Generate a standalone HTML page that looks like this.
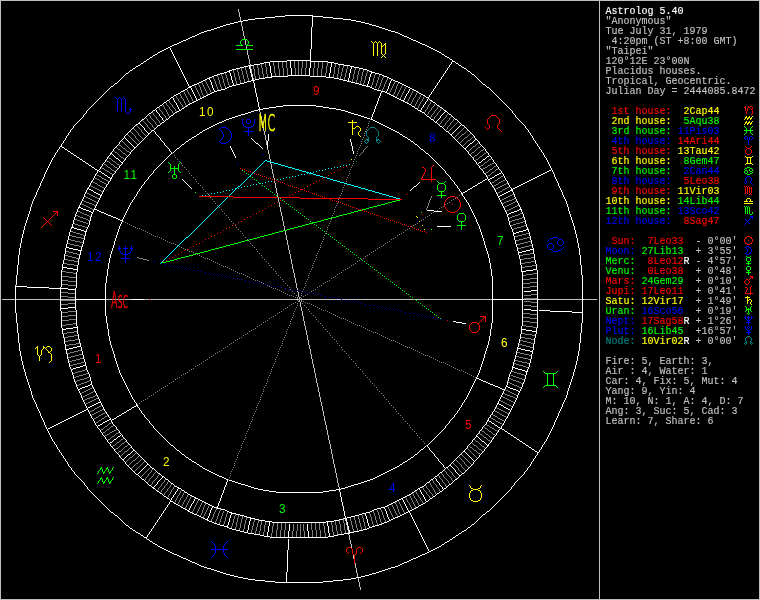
<!DOCTYPE html>
<html><head><meta charset="utf-8"><title>Astrolog 5.40</title>
<style>
html,body{margin:0;padding:0;background:#000;overflow:hidden}
svg{display:block;will-change:transform}
text{font-family:"Liberation Mono",monospace;font-size:10px;white-space:pre;stroke-width:0.15px}
text.h{font-family:"Liberation Sans",sans-serif;font-size:13px;text-anchor:middle;letter-spacing:1.6px}
text.g{font-family:"DejaVu Sans Light","DejaVu Sans","Liberation Sans",sans-serif;font-weight:200;font-size:23.3px;text-anchor:middle;stroke-width:0.7px}
</style></head><body>
<svg width="760" height="600" viewBox="0 0 760 600">
<rect width="760" height="600" fill="#000"/>
<g fill="none" stroke-width="1" shape-rendering="crispEdges">
<path stroke="#0000ff" d="M117.5 99v13M119.5 246v2M119.5 249v2M120.5 251v2M121.5 99v13M125.5 99v13M125.5 246v2M125.5 249v5M125.5 255v3M125.5 259v4M130.5 110v2M130.5 251v2M131.5 246v2M131.5 249v2M214.5 544v2M214.5 553v2M215.5 546v3M215.5 550v3M222.5 132v2M222.5 137v2M223.5 134v3M223.5 546v3M223.5 550v3M224.5 544v2M224.5 553v2M230.5 131v2M230.5 138v2M231.5 133v5M242.5 119v5M243.5 124v2M246.5 120v3M248.5 128v3M248.5 132v4M250.5 120v3M253.5 124v2M254.5 119v5M547.5 245v3M553.5 245v3M557.5 241v3M563.5 241v3M744.5 137v2M745.5 178v3M745.5 326v3M746.5 181v2M747.5 137v3M747.5 249v3M748.5 140v5M748.5 318v2M748.5 323v2M748.5 333v2M749.5 137v3M750.5 181v2M751.5 178v3M751.5 249v3M751.5 326v3M752.5 137v2M115 97.5h1M119 97.5h1M123 97.5h1M116 98.5h1M118 98.5h1M120 98.5h1M122 98.5h1M124 98.5h1M130 108.5h1M129 109.5h3M126 112.5h1M129 112.5h1M127 113.5h2M247 119.5h3M247 123.5h3M244 126.5h2M251 126.5h2M221 127.5h5M246 127.5h5M220 128.5h1M226 128.5h2M219 129.5h1M228 129.5h1M220 130.5h1M229 130.5h1M221 131.5h1M244 131.5h9M745 136.5h2M750 136.5h2M221 139.5h1M745 139.5h1M751 139.5h1M220 140.5h1M229 140.5h1M219 141.5h1M228 141.5h1M220 142.5h1M226 142.5h2M221 143.5h5M263 154.5h1M237 163.5h1M747 176.5h3M746 177.5h1M750 177.5h1M744 182.5h1M745 183.5h1M751 183.5h1M752 184.5h1M750 216.5h3M751 217.5h2M750 218.5h1M752 218.5h1M745 219.5h1M749 219.5h1M746 220.5h1M748 220.5h1M747 221.5h1M746 222.5h1M748 222.5h1M745 223.5h1M749 223.5h1M744 224.5h1M553 237.5h5M550 238.5h3M558 238.5h1M549 239.5h1M559 239.5h3M548 240.5h1M558 240.5h1M562 240.5h1M547 241.5h1M549 243.5h3M548 244.5h1M552 244.5h1M558 244.5h1M562 244.5h1M559 245.5h3M746 246.5h3M563 247.5h1M745 247.5h1M749 247.5h2M118 248.5h3M123 248.5h5M130 248.5h3M548 248.5h1M552 248.5h1M562 248.5h1M746 248.5h1M750 248.5h1M549 249.5h3M561 249.5h1M552 250.5h1M558 250.5h3M553 251.5h5M746 252.5h1M750 252.5h1M121 253.5h2M128 253.5h2M745 253.5h1M749 253.5h2M123 254.5h5M746 254.5h3M121 258.5h9M154 261.5h1M161 263.5h1M165 264.5h1M169 265.5h1M173 266.5h1M177 266.5h1M181 267.5h1M185 268.5h1M189 269.5h1M193 270.5h1M197 270.5h1M201 271.5h1M205 272.5h1M209 273.5h1M213 274.5h1M217 274.5h1M221 275.5h1M225 276.5h1M229 277.5h1M233 278.5h1M237 278.5h1M241 279.5h1M245 280.5h1M249 281.5h1M253 282.5h1M257 282.5h1M261 283.5h1M265 284.5h1M269 285.5h1M273 286.5h1M277 286.5h1M281 287.5h1M285 288.5h1M289 289.5h1M293 290.5h1M297 290.5h1M301 291.5h1M305 292.5h1M309 293.5h1M313 293.5h1M317 294.5h1M321 295.5h1M325 296.5h1M329 297.5h1M333 297.5h1M337 298.5h1M341 299.5h1M345 300.5h1M349 301.5h1M353 301.5h1M357 302.5h1M361 303.5h1M365 304.5h1M369 305.5h1M373 305.5h1M377 306.5h1M381 307.5h1M385 308.5h1M389 309.5h1M393 309.5h1M397 310.5h1M401 311.5h1M405 312.5h1M409 313.5h1M413 313.5h1M417 314.5h1M421 315.5h1M425 316.5h1M745 316.5h1M748 316.5h1M751 316.5h1M429 317.5h1M433 317.5h1M744 317.5h2M747 317.5h3M751 317.5h2M437 318.5h1M745 318.5h1M751 318.5h1M441 319.5h1M746 319.5h1M750 319.5h1M747 320.5h3M748 321.5h1M746 322.5h5M748 326.5h1M747 327.5h1M749 327.5h1M748 328.5h1M746 329.5h1M750 329.5h1M747 330.5h3M748 331.5h1M746 332.5h5M211 541.5h1M227 541.5h1M212 542.5h1M226 542.5h1M213 543.5h1M225 543.5h1M211 549.5h17M213 555.5h1M225 555.5h1M212 556.5h1M226 556.5h1M211 557.5h1M227 557.5h1"/>
<path stroke="#008080" d="M366.5 131v5M368.5 137v2M376.5 137v2M378.5 131v5M745.5 338v3M751.5 338v3M370 127.5h5M369 128.5h1M375 128.5h1M368 129.5h1M376 129.5h1M367 130.5h1M377 130.5h1M367 136.5h1M377 136.5h1M366 139.5h3M376 139.5h3M365 140.5h1M367 140.5h2M376 140.5h2M379 140.5h1M364 141.5h1M368 141.5h1M376 141.5h1M380 141.5h1M365 142.5h1M367 142.5h1M377 142.5h1M379 142.5h1M366 143.5h1M378 143.5h1M356 161.5h1M747 336.5h3M746 337.5h1M750 337.5h1M746 341.5h1M750 341.5h1M745 342.5h2M750 342.5h2M744 343.5h1M746 343.5h1M750 343.5h1M752 343.5h1M745 344.5h1M751 344.5h1"/>
<path stroke="#00ff00" d="M98.5 471v2M98.5 481v2M102.5 469v3M102.5 479v3M108.5 469v3M108.5 479v3M112.5 468v2M112.5 478v2M170.5 164v4M170.5 169v2M172.5 175v3M174.5 166v2M174.5 169v5M176.5 175v3M178.5 164v4M178.5 169v2M240.5 41v3M248.5 41v3M437.5 185v5M441.5 192v3M441.5 196v2M445.5 185v5M457.5 215v5M461.5 222v3M461.5 226v4M465.5 215v5M547.5 374v11M553.5 374v11M744.5 171v2M745.5 207v7M746.5 128v2M746.5 131v2M746.5 258v3M746.5 267v3M746.5 307v2M747.5 171v2M747.5 207v7M748.5 273v2M748.5 310v3M749.5 169v2M749.5 207v7M750.5 128v2M750.5 131v2M750.5 258v3M750.5 267v3M750.5 307v2M752.5 169v2M752.5 212v2M242 39.5h5M241 40.5h1M247 40.5h1M241 44.5h1M247 44.5h1M236 45.5h7M246 45.5h7M236 49.5h17M744 126.5h1M752 126.5h1M745 127.5h1M751 127.5h1M744 130.5h9M745 133.5h1M751 133.5h1M744 134.5h1M752 134.5h1M168 162.5h1M180 162.5h1M169 163.5h1M179 163.5h1M747 167.5h3M170 168.5h9M745 168.5h2M750 168.5h2M744 169.5h1M242 170.5h1M745 170.5h2M169 171.5h1M179 171.5h1M244 171.5h1M750 171.5h2M168 172.5h1M180 172.5h1M752 172.5h1M246 173.5h1M745 173.5h2M750 173.5h2M173 174.5h3M248 174.5h1M747 174.5h3M250 176.5h1M252 177.5h1M173 178.5h3M254 179.5h1M256 180.5h1M437 181.5h1M445 181.5h1M258 182.5h1M438 182.5h1M444 182.5h1M260 183.5h1M439 183.5h5M438 184.5h1M444 184.5h1M262 185.5h1M264 186.5h1M266 188.5h1M268 189.5h1M438 190.5h1M444 190.5h1M270 191.5h1M439 191.5h5M195 192.5h1M272 192.5h1M274 194.5h1M276 195.5h1M437 195.5h9M278 197.5h1M280 198.5h1M282 200.5h1M396 200.5h4M284 201.5h1M392 201.5h4M388 202.5h4M286 203.5h1M385 203.5h3M288 204.5h1M381 204.5h4M377 205.5h4M290 206.5h1M373 206.5h4M744 206.5h1M746 206.5h1M748 206.5h1M292 207.5h1M369 207.5h4M366 208.5h3M294 209.5h1M362 209.5h4M296 210.5h1M358 210.5h4M354 211.5h4M298 212.5h1M351 212.5h3M421 212.5h1M300 213.5h1M347 213.5h4M459 213.5h5M343 214.5h4M458 214.5h1M464 214.5h1M750 214.5h2M302 215.5h1M339 215.5h4M304 216.5h1M336 216.5h3M332 217.5h4M306 218.5h1M328 218.5h4M308 219.5h1M324 219.5h4M321 220.5h3M458 220.5h1M464 220.5h1M310 221.5h1M317 221.5h4M459 221.5h5M312 222.5h5M309 223.5h4M305 224.5h4M314 224.5h1M302 225.5h3M316 225.5h1M457 225.5h9M298 226.5h4M294 227.5h4M318 227.5h1M290 228.5h4M320 228.5h1M287 229.5h3M431 229.5h1M283 230.5h4M322 230.5h1M279 231.5h4M324 231.5h1M275 232.5h4M272 233.5h3M326 233.5h1M268 234.5h4M328 234.5h1M264 235.5h4M260 236.5h4M330 236.5h1M257 237.5h3M332 237.5h1M253 238.5h4M249 239.5h4M334 239.5h1M245 240.5h4M336 240.5h1M241 241.5h4M238 242.5h3M338 242.5h1M234 243.5h4M340 243.5h1M230 244.5h4M226 245.5h4M342 245.5h1M223 246.5h3M344 246.5h1M219 247.5h4M215 248.5h4M346 248.5h1M211 249.5h4M348 249.5h1M208 250.5h3M204 251.5h4M350 251.5h1M200 252.5h4M352 252.5h1M196 253.5h4M193 254.5h3M354 254.5h1M189 255.5h4M356 255.5h1M185 256.5h4M746 256.5h1M750 256.5h1M181 257.5h4M358 257.5h1M747 257.5h3M177 258.5h4M360 258.5h1M174 259.5h3M170 260.5h4M362 260.5h1M166 261.5h4M364 261.5h1M747 261.5h3M162 262.5h4M748 262.5h1M160 263.5h1M366 263.5h1M746 263.5h5M368 264.5h1M748 264.5h1M370 266.5h1M747 266.5h3M372 267.5h1M374 269.5h1M376 270.5h1M747 270.5h3M748 271.5h1M378 272.5h1M746 272.5h5M380 273.5h1M382 275.5h1M384 276.5h1M386 278.5h1M388 279.5h1M390 281.5h1M392 282.5h1M394 284.5h1M396 285.5h1M398 287.5h1M400 288.5h1M402 290.5h1M404 291.5h1M406 293.5h1M408 294.5h1M410 296.5h1M412 297.5h1M414 299.5h1M416 300.5h1M418 302.5h1M420 303.5h1M422 305.5h1M424 306.5h1M745 306.5h1M751 306.5h1M426 308.5h1M748 308.5h1M428 309.5h1M746 309.5h5M746 310.5h1M750 310.5h1M430 311.5h1M745 311.5h1M751 311.5h1M432 312.5h1M747 313.5h1M749 313.5h1M434 314.5h1M748 314.5h1M436 315.5h1M438 317.5h1M440 318.5h1M543 371.5h1M557 371.5h1M544 372.5h1M556 372.5h1M545 373.5h11M545 385.5h11M544 386.5h1M556 386.5h1M543 387.5h1M557 387.5h1M101 467.5h1M107 467.5h1M113 467.5h1M100 468.5h2M106 468.5h2M100 469.5h1M106 469.5h1M99 470.5h1M105 470.5h1M111 470.5h1M104 471.5h1M110 471.5h1M103 472.5h2M109 472.5h2M97 473.5h1M103 473.5h1M109 473.5h1M101 477.5h1M107 477.5h1M113 477.5h1M100 478.5h2M106 478.5h2M100 479.5h1M106 479.5h1M99 480.5h1M105 480.5h1M111 480.5h1M104 481.5h1M110 481.5h1M103 482.5h2M109 482.5h2M97 483.5h1M103 483.5h1M109 483.5h1"/>
<path stroke="#00ffff" d="M265 160.5h2M264 161.5h1M267 161.5h4M263 162.5h1M271 162.5h3M262 163.5h1M274 163.5h4M261 164.5h1M278 164.5h3M349 164.5h1M260 165.5h1M281 165.5h4M343 165.5h1M346 165.5h1M259 166.5h1M285 166.5h3M340 166.5h1M258 167.5h1M288 167.5h4M334 167.5h1M337 167.5h1M257 168.5h1M292 168.5h3M328 168.5h1M331 168.5h1M256 169.5h1M295 169.5h4M325 169.5h1M255 170.5h1M299 170.5h3M319 170.5h1M322 170.5h1M254 171.5h1M302 171.5h4M316 171.5h1M253 172.5h1M306 172.5h3M310 172.5h1M313 172.5h1M252 173.5h1M307 173.5h1M309 173.5h4M251 174.5h1M301 174.5h1M304 174.5h1M313 174.5h3M250 175.5h1M298 175.5h1M316 175.5h4M249 176.5h1M292 176.5h1M295 176.5h1M320 176.5h3M248 177.5h1M286 177.5h1M289 177.5h1M323 177.5h2M326 177.5h1M247 178.5h1M283 178.5h1M327 178.5h3M246 179.5h1M277 179.5h1M280 179.5h1M330 179.5h3M245 180.5h1M333 180.5h4M244 181.5h1M268 181.5h1M271 181.5h1M337 181.5h3M243 182.5h1M265 182.5h1M340 182.5h4M242 183.5h1M259 183.5h1M262 183.5h1M344 183.5h3M241 184.5h1M253 184.5h1M256 184.5h1M347 184.5h4M240 185.5h1M250 185.5h1M351 185.5h3M238 186.5h2M244 186.5h1M247 186.5h1M354 186.5h4M237 187.5h1M241 187.5h1M358 187.5h3M235 188.5h2M238 188.5h1M361 188.5h4M232 189.5h1M235 189.5h1M365 189.5h3M226 190.5h1M229 190.5h1M234 190.5h1M368 190.5h4M223 191.5h1M233 191.5h1M372 191.5h3M217 192.5h1M220 192.5h1M232 192.5h1M375 192.5h4M211 193.5h1M214 193.5h1M231 193.5h1M379 193.5h3M208 194.5h1M230 194.5h1M382 194.5h4M202 195.5h1M205 195.5h1M229 195.5h1M386 195.5h3M389 196.5h4M227 197.5h1M393 197.5h3M226 198.5h1M396 198.5h4M225 199.5h1M224 200.5h1M223 201.5h1M222 202.5h1M221 203.5h1M220 204.5h1M219 205.5h1M218 206.5h1M217 207.5h1M216 208.5h1M215 209.5h1M214 210.5h1M213 211.5h1M212 212.5h1M211 213.5h1M210 214.5h1M209 215.5h1M208 216.5h1M207 217.5h1M206 218.5h1M205 219.5h1M204 220.5h1M203 221.5h1M202 222.5h1M201 223.5h1M200 224.5h1M199 225.5h1M198 226.5h1M197 227.5h1M196 228.5h1M195 229.5h1M194 230.5h1M193 231.5h1M192 232.5h1M191 233.5h1M190 234.5h1M189 235.5h1M188 236.5h1M186 237.5h2M185 238.5h1M184 239.5h1M183 240.5h1M182 241.5h1M181 242.5h1M180 243.5h1M179 244.5h1M178 245.5h1M177 246.5h1M176 247.5h1M175 248.5h1M174 249.5h1M173 250.5h1M172 251.5h1M171 252.5h1M170 253.5h1M169 254.5h1M168 255.5h1M167 256.5h1M166 257.5h1M165 258.5h1M164 259.5h1M163 260.5h1M162 261.5h1M161 262.5h1"/>
<path stroke="#808080" d="M135.5 136v2M138.5 133v2M141.5 130v2M145.5 478v2M147.5 119v2M147.5 125v2M148.5 474v2M149.5 479v2M150.5 116v2M151.5 470v2M152.5 125v2M152.5 482v2M153.5 113v2M153.5 474v2M155.5 122v2M156.5 117v2M157.5 476v2M158.5 488v2M159.5 108v2M159.5 121v2M161.5 484v2M161.5 490v2M162.5 112v2M163.5 105v2M164.5 107v2M164.5 480v2M164.5 486v2M164.5 493v2M165.5 116v2M166.5 103v2M166.5 110v2M167.5 112v2M167.5 482v2M167.5 489v2M168.5 114v2M168.5 495v2M169.5 101v2M169.5 107v2M170.5 485v2M170.5 492v2M171.5 490v2M172.5 105v2M172.5 111v2M173.5 487v2M175.5 109v2M175.5 500v2M176.5 96v2M176.5 498v2M177.5 496v2M178.5 99v2M178.5 502v2M179.5 493v2M179.5 500v2M180.5 94v2M180.5 102v2M180.5 491v2M180.5 498v2M181.5 96v2M182.5 105v2M182.5 495v2M182.5 504v2M183.5 99v2M183.5 493v2M183.5 502v2M184.5 92v2M184.5 101v2M184.5 500v2M185.5 94v2M185.5 103v2M185.5 507v2M186.5 96v2M186.5 497v2M186.5 505v2M187.5 90v2M187.5 98v2M187.5 495v2M187.5 503v2M188.5 92v2M188.5 100v2M188.5 501v2M189.5 102v2M189.5 499v2M190.5 95v2M190.5 497v2M191.5 97v2M192.5 99v2M192.5 511v2M193.5 509v2M194.5 507v2M195.5 86v2M195.5 505v2M196.5 88v2M196.5 503v2M197.5 90v2M197.5 501v2M197.5 511v2M198.5 92v2M198.5 509v2M199.5 85v2M199.5 94v2M199.5 507v2M200.5 87v3M200.5 96v2M200.5 505v2M201.5 90v3M201.5 503v2M201.5 513v2M202.5 83v2M202.5 93v2M202.5 510v3M203.5 85v2M203.5 95v2M203.5 507v3M203.5 516v2M204.5 87v2M204.5 505v2M204.5 514v2M205.5 80v2M205.5 89v2M205.5 503v2M205.5 512v2M206.5 82v2M206.5 91v2M206.5 510v2M207.5 84v2M207.5 93v2M207.5 508v2M208.5 86v2M208.5 506v2M209.5 88v2M210.5 90v2M211.5 519v2M212.5 517v2M213.5 77v2M213.5 514v3M214.5 79v2M214.5 512v2M215.5 81v3M215.5 510v2M215.5 521v2M216.5 84v3M216.5 508v2M216.5 519v2M217.5 75v2M217.5 87v2M217.5 516v3M218.5 77v3M218.5 513v3M219.5 80v4M219.5 511v2M219.5 522v2M220.5 84v3M220.5 509v2M220.5 519v3M221.5 74v2M221.5 87v2M221.5 516v3M222.5 76v3M222.5 513v3M223.5 79v4M223.5 511v2M224.5 83v3M224.5 521v3M225.5 73v2M225.5 86v2M225.5 517v4M226.5 75v3M226.5 514v3M227.5 78v4M227.5 512v2M228.5 82v3M231.5 526v2M232.5 523v3M233.5 70v3M233.5 519v4M234.5 73v4M234.5 516v3M235.5 77v4M235.5 514v2M235.5 527v2M236.5 81v3M236.5 522v5M237.5 69v3M237.5 518v4M238.5 72v4M238.5 515v3M239.5 76v4M239.5 528v2M240.5 80v3M240.5 523v5M241.5 68v3M241.5 519v4M242.5 71v4M242.5 516v3M243.5 75v4M243.5 529v2M244.5 79v3M244.5 524v5M245.5 67v3M245.5 520v4M246.5 70v4M246.5 517v3M247.5 74v4M248.5 78v3M251.5 530v3M252.5 526v4M253.5 66v3M253.5 522v4M254.5 69v7M254.5 519v3M255.5 76v3M255.5 531v3M256.5 527v4M257.5 65v3M257.5 523v4M258.5 68v7M258.5 520v3M259.5 75v3M259.5 531v3M260.5 525v6M261.5 64v4M261.5 521v4M262.5 68v6M263.5 74v4M263.5 532v3M264.5 525v7M265.5 63v4M265.5 522v3M266.5 67v7M267.5 74v3M271.5 533v4M272.5 526v7M273.5 62v4M273.5 523v3M274.5 66v7M275.5 73v3M276.5 530v7M277.5 523v7M278.5 62v7M279.5 69v7M280.5 530v7M281.5 523v7M282.5 62v6M283.5 68v8M284.5 530v7M285.5 523v7M286.5 62v6M287.5 68v8M292.5 531v6M293.5 524v7M294.5 61v7M295.5 68v7M296.5 531v6M297.5 297v2M297.5 524v7M298.5 61v14M300.5 524v13M301.5 68v7M301.5 300v2M302.5 61v7M303.5 524v7M304.5 531v6M305.5 68v7M306.5 61v7M311.5 523v7M312.5 530v7M313.5 68v8M314.5 62v6M315.5 523v7M316.5 530v7M317.5 68v8M318.5 62v6M319.5 523v7M320.5 530v7M321.5 69v7M322.5 62v7M323.5 523v3M324.5 526v7M325.5 73v3M325.5 533v4M326.5 66v7M327.5 62v4M331.5 522v3M332.5 525v7M333.5 74v3M333.5 532v4M334.5 67v7M335.5 64v3M335.5 521v4M336.5 525v6M337.5 74v4M337.5 531v4M338.5 68v6M339.5 65v3M339.5 520v4M340.5 76v3M340.5 524v7M341.5 72v4M341.5 531v3M342.5 68v4M343.5 65v3M343.5 519v4M344.5 77v3M344.5 523v7M345.5 73v4M345.5 530v3M346.5 69v4M347.5 66v3M350.5 518v3M351.5 521v4M352.5 79v3M352.5 525v4M353.5 74v5M353.5 529v3M354.5 70v4M354.5 517v3M355.5 68v2M355.5 520v4M356.5 80v3M356.5 524v4M357.5 75v5M357.5 528v3M358.5 71v4M358.5 516v3M359.5 69v2M359.5 519v4M360.5 81v3M360.5 523v4M361.5 76v5M361.5 527v3M362.5 72v4M362.5 515v3M363.5 70v2M363.5 83v2M363.5 150v2M363.5 518v4M364.5 80v3M364.5 522v4M365.5 76v4M365.5 526v3M366.5 73v3M367.5 71v2M370.5 514v3M371.5 85v2M371.5 517v4M372.5 82v3M372.5 521v3M373.5 78v4M373.5 511v2M373.5 524v2M374.5 75v3M374.5 513v3M375.5 86v2M375.5 516v4M376.5 83v3M376.5 520v3M377.5 80v3M377.5 510v2M377.5 523v2M378.5 77v3M378.5 88v2M378.5 512v3M379.5 75v2M379.5 86v2M379.5 515v4M380.5 83v3M380.5 519v3M381.5 80v3M381.5 510v2M381.5 522v2M382.5 78v2M382.5 89v2M382.5 512v3M383.5 76v2M383.5 87v2M383.5 515v3M384.5 84v3M384.5 518v2M385.5 82v2M385.5 520v2M386.5 80v2M387.5 78v2M388.5 507v2M389.5 92v2M389.5 509v2M390.5 90v2M390.5 511v2M391.5 88v2M391.5 513v2M392.5 86v2M392.5 505v2M392.5 515v2M393.5 84v2M393.5 94v2M393.5 507v2M394.5 82v2M394.5 92v2M394.5 509v2M395.5 89v3M395.5 502v2M395.5 511v2M396.5 86v3M396.5 504v2M396.5 513v2M397.5 84v2M397.5 94v2M397.5 506v3M397.5 515v2M398.5 92v2M398.5 509v3M399.5 90v2M399.5 502v2M399.5 512v2M400.5 88v2M400.5 97v2M400.5 504v2M401.5 86v2M401.5 95v2M401.5 506v2M402.5 93v2M402.5 508v2M403.5 91v2M403.5 510v2M404.5 89v2M405.5 87v2M406.5 498v2M407.5 101v2M407.5 500v2M408.5 99v2M409.5 97v2M409.5 503v2M410.5 95v2M410.5 496v2M410.5 505v2M411.5 93v2M411.5 102v2M411.5 498v2M411.5 507v2M412.5 91v2M412.5 100v2M412.5 500v2M413.5 98v2M413.5 494v2M413.5 502v2M414.5 496v2M414.5 504v2M415.5 95v2M415.5 104v2M415.5 506v2M416.5 93v2M416.5 102v2M416.5 492v2M416.5 499v2M417.5 100v2M417.5 501v2M418.5 106v2M418.5 495v2M418.5 503v2M419.5 97v2M419.5 104v2M420.5 95v2M420.5 102v2M420.5 498v2M422.5 99v2M422.5 501v2M423.5 97v2M423.5 488v2M425.5 110v2M426.5 208v2M426.5 486v2M426.5 492v2M427.5 107v2M427.5 206v2M428.5 105v2M428.5 112v2M428.5 203v3M429.5 200v3M429.5 490v2M429.5 496v2M430.5 102v2M430.5 198v2M430.5 483v2M431.5 108v2M431.5 115v2M431.5 196v2M431.5 485v2M432.5 494v2M433.5 481v2M433.5 488v2M434.5 104v2M434.5 111v2M434.5 117v2M434.5 490v2M435.5 492v2M436.5 485v2M437.5 107v2M437.5 113v2M439.5 476v2M439.5 489v2M440.5 109v2M441.5 121v2M442.5 480v2M443.5 475v2M445.5 123v2M445.5 484v2M446.5 115v2M446.5 472v2M447.5 127v2M448.5 481v2M449.5 118v2M450.5 123v2M451.5 478v2M452.5 473v2M453.5 119v2M458.5 468v2M461.5 465v2M464.5 462v2M375 74.5h1M201 82.5h1M398 83.5h1M198 84.5h1M194 85.5h1M229 85.5h1M402 85.5h1M218 89.5h1M413 90.5h1M183 91.5h1M211 92.5h1M417 92.5h1M189 94.5h1M396 96.5h1M424 96.5h1M414 97.5h1M177 98.5h1M182 98.5h1M418 99.5h1M179 101.5h1M193 101.5h1M421 101.5h1M431 101.5h1M170 103.5h1M171 104.5h1M181 104.5h1M429 104.5h1M167 105.5h1M186 105.5h1M168 106.5h1M414 106.5h1M433 106.5h1M438 106.5h1M173 107.5h1M183 107.5h1M432 107.5h1M174 108.5h1M417 108.5h1M441 108.5h1M165 109.5h1M170 109.5h1M426 109.5h1M436 109.5h1M160 110.5h1M171 110.5h1M430 110.5h1M435 110.5h1M161 111.5h1M176 111.5h1M429 111.5h1M439 111.5h1M152 112.5h1M424 112.5h1M438 112.5h1M173 113.5h1M433 113.5h1M163 114.5h1M427 114.5h1M432 114.5h1M447 114.5h1M149 115.5h1M154 115.5h1M164 115.5h1M436 115.5h1M155 116.5h1M169 116.5h1M435 116.5h1M451 116.5h1M430 117.5h1M445 117.5h1M450 117.5h1M146 118.5h1M151 118.5h1M166 118.5h1M444 118.5h1M152 119.5h1M157 119.5h1M370 119.5h1M433 119.5h1M443 119.5h1M142 120.5h1M153 120.5h1M158 120.5h1M442 120.5h1M448 120.5h1M143 121.5h1M148 121.5h1M154 121.5h1M369 121.5h1M447 121.5h1M452 121.5h1M144 122.5h1M149 122.5h1M446 122.5h1M451 122.5h1M457 122.5h1M145 123.5h1M150 123.5h1M160 123.5h1M368 123.5h1M440 123.5h1M456 123.5h1M146 124.5h1M151 124.5h1M156 124.5h1M439 124.5h1M455 124.5h1M136 125.5h1M157 125.5h1M368 125.5h1M444 125.5h1M449 125.5h1M454 125.5h1M137 126.5h1M443 126.5h1M448 126.5h1M453 126.5h1M138 127.5h1M148 127.5h1M153 127.5h1M367 127.5h1M452 127.5h1M464 127.5h1M133 128.5h1M139 128.5h1M149 128.5h1M154 128.5h1M451 128.5h1M463 128.5h1M134 129.5h1M140 129.5h1M150 129.5h1M366 129.5h1M446 129.5h1M450 129.5h1M462 129.5h1M135 130.5h1M151 130.5h1M449 130.5h1M461 130.5h1M467 130.5h1M130 131.5h1M136 131.5h1M365 131.5h1M448 131.5h1M460 131.5h1M466 131.5h1M131 132.5h1M137 132.5h1M142 132.5h1M459 132.5h1M465 132.5h1M132 133.5h1M143 133.5h1M364 133.5h1M458 133.5h1M464 133.5h1M470 133.5h1M127 134.5h1M133 134.5h1M144 134.5h1M457 134.5h1M462 134.5h2M469 134.5h1M128 135.5h1M134 135.5h1M139 135.5h1M145 135.5h1M364 135.5h1M456 135.5h1M461 135.5h1M468 135.5h1M129 136.5h1M140 136.5h1M455 136.5h1M460 136.5h1M467 136.5h1M473 136.5h1M130 137.5h1M141 137.5h1M363 137.5h1M454 137.5h1M459 137.5h1M465 137.5h2M472 137.5h1M131 138.5h1M136 138.5h1M142 138.5h1M458 138.5h1M464 138.5h1M471 138.5h1M132 139.5h1M137 139.5h1M362 139.5h1M457 139.5h1M463 139.5h1M470 139.5h1M133 140.5h1M138 140.5h1M462 140.5h1M468 140.5h2M122 141.5h1M134 141.5h1M139 141.5h1M361 141.5h1M461 141.5h1M467 141.5h1M123 142.5h1M135 142.5h1M460 142.5h1M466 142.5h1M478 142.5h1M124 143.5h1M136 143.5h1M361 143.5h1M465 143.5h1M477 143.5h1M125 144.5h1M137 144.5h1M464 144.5h1M476 144.5h1M119 145.5h2M126 145.5h1M360 145.5h1M463 145.5h1M475 145.5h1M121 146.5h1M127 146.5h1M367 146.5h1M473 146.5h2M480 146.5h1M116 147.5h1M122 147.5h1M128 147.5h1M359 147.5h1M366 147.5h1M472 147.5h1M478 147.5h2M117 148.5h1M123 148.5h2M129 148.5h1M365 148.5h1M471 148.5h1M477 148.5h1M118 149.5h2M125 149.5h1M130 149.5h1M358 149.5h1M364 149.5h1M470 149.5h1M476 149.5h1M483 149.5h1M120 150.5h1M126 150.5h1M131 150.5h1M469 150.5h1M475 150.5h1M481 150.5h2M114 151.5h1M121 151.5h1M127 151.5h2M357 151.5h1M468 151.5h1M474 151.5h1M480 151.5h1M115 152.5h2M122 152.5h1M129 152.5h1M362 152.5h1M472 152.5h2M479 152.5h1M486 152.5h1M117 153.5h1M123 153.5h2M172 153.5h1M357 153.5h1M361 153.5h1M471 153.5h1M478 153.5h1M484 153.5h2M118 154.5h1M125 154.5h1M360 154.5h1M470 154.5h1M477 154.5h1M483 154.5h1M119 155.5h1M126 155.5h1M174 155.5h1M356 155.5h1M359 155.5h1M475 155.5h2M482 155.5h1M120 156.5h1M474 156.5h1M480 156.5h2M108 157.5h1M121 157.5h2M175 157.5h1M355 157.5h1M473 157.5h1M479 157.5h1M109 158.5h2M123 158.5h1M478 158.5h1M111 159.5h1M124 159.5h1M177 159.5h1M354 159.5h1M476 159.5h2M489 159.5h2M106 160.5h1M112 160.5h1M475 160.5h1M488 160.5h1M107 161.5h2M113 161.5h2M179 161.5h1M353 161.5h1M487 161.5h1M109 162.5h1M115 162.5h1M485 162.5h2M110 163.5h1M116 163.5h1M181 163.5h1M353 163.5h1M484 163.5h1M492 163.5h2M104 164.5h2M111 164.5h2M117 164.5h2M483 164.5h1M490 164.5h2M106 165.5h1M113 165.5h1M119 165.5h1M182 165.5h1M352 165.5h1M481 165.5h2M488 165.5h2M107 166.5h1M114 166.5h1M480 166.5h1M487 166.5h1M494 166.5h2M101 167.5h1M108 167.5h2M115 167.5h2M184 167.5h1M351 167.5h1M485 167.5h2M493 167.5h1M102 168.5h2M110 168.5h1M117 168.5h1M483 168.5h2M492 168.5h1M104 169.5h1M111 169.5h1M186 169.5h1M350 169.5h1M482 169.5h1M490 169.5h2M496 169.5h2M105 170.5h2M112 170.5h2M489 170.5h1M495 170.5h1M107 171.5h2M114 171.5h1M188 171.5h1M349 171.5h1M488 171.5h1M494 171.5h1M109 172.5h1M486 172.5h2M492 172.5h2M110 173.5h2M189 173.5h1M349 173.5h1M485 173.5h1M491 173.5h1M96 174.5h1M112 174.5h1M490 174.5h1M97 175.5h2M191 175.5h1M348 175.5h1M488 175.5h2M99 176.5h2M487 176.5h1M501 176.5h2M101 177.5h1M193 177.5h1M347 177.5h1M500 177.5h1M95 178.5h2M102 178.5h2M498 178.5h2M97 179.5h2M104 179.5h2M195 179.5h1M346 179.5h1M497 179.5h1M99 180.5h1M106 180.5h2M495 180.5h2M503 180.5h2M92 181.5h1M100 181.5h2M108 181.5h1M196 181.5h1M346 181.5h1M494 181.5h1M501 181.5h2M93 182.5h2M102 182.5h2M492 182.5h2M499 182.5h2M95 183.5h2M104 183.5h2M198 183.5h1M491 183.5h1M498 183.5h1M506 183.5h2M97 184.5h1M106 184.5h1M496 184.5h2M504 184.5h2M90 185.5h1M98 185.5h2M200 185.5h1M344 185.5h1M494 185.5h2M502 185.5h2M91 186.5h2M100 186.5h2M493 186.5h1M500 186.5h2M93 187.5h2M102 187.5h2M202 187.5h1M343 187.5h1M498 187.5h2M507 187.5h2M95 188.5h2M496 188.5h2M505 188.5h2M97 189.5h2M203 189.5h1M342 189.5h1M495 189.5h1M503 189.5h2M99 190.5h2M502 190.5h1M101 191.5h2M205 191.5h1M342 191.5h1M500 191.5h2M86 192.5h1M498 192.5h2M87 193.5h2M207 193.5h1M341 193.5h1M497 193.5h1M89 194.5h2M461 194.5h1M512 194.5h2M91 195.5h2M209 195.5h1M340 195.5h1M459 195.5h1M510 195.5h2M85 196.5h1M93 196.5h2M508 196.5h2M86 197.5h2M95 197.5h2M210 197.5h1M339 197.5h1M457 197.5h1M506 197.5h2M88 198.5h2M97 198.5h2M455 198.5h1M504 198.5h2M514 198.5h1M90 199.5h2M212 199.5h1M338 199.5h1M453 199.5h1M502 199.5h2M512 199.5h2M83 200.5h1M92 200.5h2M451 200.5h1M501 200.5h1M509 200.5h3M84 201.5h2M94 201.5h2M214 201.5h1M338 201.5h1M506 201.5h3M515 201.5h2M86 202.5h3M96 202.5h1M449 202.5h1M504 202.5h2M513 202.5h2M81 203.5h1M89 203.5h3M215 203.5h1M337 203.5h1M447 203.5h1M502 203.5h2M511 203.5h2M82 204.5h2M92 204.5h2M445 204.5h1M509 204.5h2M84 205.5h2M94 205.5h2M217 205.5h1M336 205.5h1M507 205.5h2M517 205.5h2M86 206.5h2M443 206.5h1M505 206.5h2M515 206.5h2M88 207.5h2M219 207.5h1M335 207.5h1M441 207.5h1M504 207.5h1M513 207.5h2M90 208.5h2M439 208.5h1M511 208.5h2M92 209.5h2M221 209.5h1M334 209.5h1M509 209.5h2M437 210.5h1M507 210.5h2M78 211.5h2M222 211.5h1M334 211.5h1M506 211.5h1M80 212.5h2M433 212.5h1M82 213.5h2M224 213.5h1M333 213.5h1M431 213.5h1M520 213.5h2M84 214.5h3M518 214.5h2M76 215.5h2M87 215.5h2M226 215.5h1M332 215.5h1M429 215.5h1M515 215.5h3M78 216.5h2M89 216.5h2M427 216.5h1M512 216.5h3M80 217.5h3M228 217.5h1M331 217.5h1M425 217.5h1M510 217.5h2M522 217.5h2M83 218.5h3M509 218.5h1M519 218.5h3M75 219.5h2M86 219.5h2M229 219.5h1M331 219.5h1M423 219.5h1M515 219.5h4M77 220.5h3M88 220.5h2M421 220.5h1M512 220.5h3M80 221.5h3M123 221.5h1M231 221.5h1M330 221.5h1M510 221.5h2M523 221.5h2M83 222.5h3M125 222.5h1M520 222.5h3M74 223.5h1M86 223.5h2M127 223.5h1M233 223.5h1M329 223.5h1M417 223.5h1M516 223.5h4M75 224.5h3M129 224.5h1M415 224.5h1M513 224.5h3M78 225.5h4M131 225.5h1M235 225.5h1M328 225.5h1M413 225.5h1M511 225.5h2M524 225.5h2M82 226.5h3M133 226.5h1M411 226.5h1M521 226.5h3M85 227.5h2M135 227.5h1M236 227.5h1M327 227.5h1M517 227.5h4M137 228.5h1M139 228.5h1M409 228.5h1M514 228.5h3M141 229.5h1M238 229.5h1M327 229.5h1M407 229.5h1M513 229.5h1M143 230.5h1M405 230.5h1M71 231.5h2M145 231.5h1M240 231.5h1M326 231.5h1M73 232.5h3M147 232.5h1M403 232.5h1M76 233.5h4M149 233.5h1M242 233.5h1M325 233.5h1M401 233.5h1M526 233.5h3M80 234.5h3M151 234.5h1M399 234.5h1M522 234.5h4M70 235.5h2M83 235.5h2M153 235.5h1M243 235.5h1M324 235.5h1M397 235.5h1M518 235.5h4M72 236.5h4M155 236.5h1M157 236.5h1M515 236.5h3M76 237.5h5M159 237.5h1M245 237.5h1M323 237.5h1M395 237.5h1M527 237.5h3M81 238.5h3M161 238.5h1M393 238.5h1M523 238.5h4M69 239.5h2M163 239.5h1M247 239.5h1M323 239.5h1M391 239.5h1M519 239.5h4M71 240.5h4M165 240.5h1M516 240.5h3M75 241.5h5M167 241.5h1M249 241.5h1M322 241.5h1M389 241.5h1M528 241.5h3M80 242.5h3M169 242.5h1M387 242.5h1M524 242.5h4M68 243.5h2M171 243.5h1M173 243.5h1M250 243.5h1M321 243.5h1M385 243.5h1M520 243.5h4M70 244.5h4M175 244.5h1M517 244.5h3M74 245.5h5M177 245.5h1M252 245.5h1M320 245.5h1M383 245.5h1M529 245.5h3M79 246.5h3M179 246.5h1M381 246.5h1M525 246.5h4M181 247.5h1M254 247.5h1M320 247.5h1M379 247.5h1M521 247.5h4M183 248.5h1M377 248.5h1M518 248.5h3M185 249.5h1M256 249.5h1M319 249.5h1M187 250.5h1M375 250.5h1M66 251.5h3M189 251.5h1M191 251.5h1M257 251.5h1M318 251.5h1M373 251.5h1M69 252.5h4M193 252.5h1M371 252.5h1M73 253.5h4M195 253.5h1M259 253.5h1M317 253.5h1M530 253.5h3M77 254.5h3M197 254.5h1M369 254.5h1M523 254.5h7M65 255.5h3M199 255.5h1M261 255.5h1M316 255.5h1M367 255.5h1M520 255.5h3M68 256.5h4M201 256.5h1M365 256.5h1M72 257.5h4M137 257.5h2M203 257.5h1M262 257.5h1M316 257.5h1M531 257.5h3M76 258.5h3M139 258.5h4M205 258.5h1M207 258.5h1M363 258.5h1M524 258.5h7M65 259.5h3M143 259.5h4M209 259.5h1M264 259.5h1M315 259.5h1M361 259.5h1M521 259.5h3M68 260.5h6M147 260.5h2M211 260.5h1M359 260.5h1M74 261.5h4M213 261.5h1M266 261.5h1M314 261.5h1M357 261.5h1M531 261.5h4M215 262.5h1M525 262.5h6M64 263.5h3M217 263.5h1M268 263.5h1M313 263.5h1M355 263.5h1M521 263.5h4M67 264.5h7M219 264.5h1M353 264.5h1M74 265.5h3M221 265.5h1M269 265.5h1M312 265.5h1M351 265.5h1M532 265.5h4M223 266.5h1M225 266.5h1M525 266.5h7M227 267.5h1M271 267.5h1M312 267.5h1M349 267.5h1M522 267.5h3M229 268.5h1M347 268.5h1M231 269.5h1M273 269.5h1M311 269.5h1M345 269.5h1M233 270.5h1M343 270.5h1M62 271.5h4M235 271.5h1M275 271.5h1M310 271.5h1M66 272.5h7M237 272.5h1M341 272.5h1M73 273.5h3M239 273.5h1M241 273.5h1M276 273.5h1M309 273.5h1M339 273.5h1M533 273.5h4M243 274.5h1M337 274.5h1M526 274.5h7M245 275.5h1M278 275.5h1M308 275.5h1M523 275.5h3M62 276.5h7M247 276.5h1M335 276.5h1M69 277.5h7M249 277.5h1M280 277.5h1M308 277.5h1M333 277.5h1M251 278.5h1M331 278.5h1M530 278.5h7M253 279.5h1M282 279.5h1M307 279.5h1M523 279.5h7M62 280.5h6M255 280.5h1M257 280.5h1M329 280.5h1M68 281.5h8M259 281.5h1M283 281.5h1M306 281.5h1M327 281.5h1M261 282.5h1M325 282.5h1M530 282.5h7M263 283.5h1M285 283.5h1M305 283.5h1M323 283.5h1M523 283.5h7M62 284.5h6M68 285.5h8M267 285.5h1M287 285.5h1M305 285.5h1M321 285.5h1M269 286.5h1M319 286.5h1M530 286.5h7M271 287.5h1M289 287.5h1M304 287.5h1M317 287.5h1M523 287.5h7M273 288.5h1M275 288.5h1M277 289.5h1M290 289.5h1M303 289.5h1M315 289.5h1M279 290.5h1M313 290.5h1M281 291.5h1M292 291.5h1M302 291.5h1M311 291.5h1M61 292.5h7M283 292.5h1M68 293.5h7M285 293.5h1M294 293.5h1M301 293.5h1M287 294.5h1M307 294.5h1M531 294.5h6M289 295.5h1M291 295.5h1M296 295.5h1M301 295.5h1M305 295.5h1M524 295.5h7M61 296.5h7M293 296.5h1M303 296.5h1M68 297.5h7M295 297.5h1M300 297.5h1M301 298.5h1M524 298.5h13M299 299.5h1M61 300.5h14M297 300.5h1M298 301.5h1M303 301.5h1M524 301.5h7M295 302.5h1M305 302.5h1M531 302.5h6M68 303.5h7M293 303.5h1M297 303.5h1M302 303.5h1M307 303.5h1M309 303.5h1M61 304.5h7M291 304.5h1M311 304.5h1M289 305.5h1M297 305.5h1M304 305.5h1M313 305.5h1M524 305.5h7M315 306.5h1M531 306.5h6M287 307.5h1M296 307.5h1M306 307.5h1M317 307.5h1M285 308.5h1M319 308.5h1M283 309.5h1M295 309.5h1M308 309.5h1M321 309.5h1M323 310.5h1M325 310.5h1M68 311.5h8M281 311.5h1M294 311.5h1M309 311.5h1M327 311.5h1M62 312.5h6M279 312.5h1M329 312.5h1M277 313.5h1M293 313.5h1M311 313.5h1M331 313.5h1M523 313.5h7M333 314.5h1M530 314.5h7M68 315.5h8M275 315.5h1M293 315.5h1M313 315.5h1M335 315.5h1M62 316.5h6M273 316.5h1M337 316.5h1M271 317.5h1M292 317.5h1M315 317.5h1M339 317.5h1M523 317.5h7M269 318.5h1M341 318.5h1M343 318.5h1M530 318.5h7M69 319.5h7M291 319.5h1M316 319.5h1M345 319.5h1M62 320.5h7M267 320.5h1M347 320.5h1M265 321.5h1M290 321.5h1M318 321.5h1M349 321.5h1M523 321.5h7M263 322.5h1M351 322.5h1M530 322.5h7M73 323.5h3M290 323.5h1M320 323.5h1M353 323.5h1M66 324.5h7M261 324.5h1M355 324.5h1M62 325.5h4M259 325.5h1M289 325.5h1M322 325.5h1M357 325.5h1M359 325.5h1M523 325.5h3M257 326.5h1M361 326.5h1M526 326.5h7M288 327.5h1M323 327.5h1M363 327.5h1M533 327.5h4M255 328.5h1M365 328.5h1M253 329.5h1M287 329.5h1M325 329.5h1M367 329.5h1M251 330.5h1M369 330.5h1M74 331.5h3M249 331.5h1M286 331.5h1M327 331.5h1M371 331.5h1M67 332.5h7M373 332.5h1M375 332.5h1M63 333.5h4M247 333.5h1M286 333.5h1M329 333.5h1M377 333.5h1M522 333.5h3M245 334.5h1M379 334.5h1M525 334.5h7M74 335.5h4M243 335.5h1M285 335.5h1M330 335.5h1M381 335.5h1M532 335.5h3M68 336.5h6M383 336.5h1M64 337.5h4M241 337.5h1M284 337.5h1M332 337.5h1M385 337.5h1M521 337.5h4M239 338.5h1M387 338.5h1M525 338.5h6M75 339.5h4M237 339.5h1M283 339.5h1M334 339.5h1M389 339.5h1M531 339.5h3M68 340.5h7M235 340.5h1M391 340.5h1M393 340.5h1M520 340.5h3M65 341.5h3M282 341.5h1M336 341.5h1M395 341.5h1M523 341.5h4M233 342.5h1M397 342.5h1M527 342.5h4M76 343.5h4M231 343.5h1M282 343.5h1M337 343.5h1M399 343.5h1M531 343.5h3M69 344.5h7M229 344.5h1M401 344.5h1M519 344.5h3M66 345.5h3M281 345.5h1M339 345.5h1M403 345.5h1M522 345.5h4M227 346.5h1M405 346.5h1M526 346.5h4M225 347.5h1M280 347.5h1M341 347.5h1M407 347.5h1M409 347.5h1M530 347.5h3M223 348.5h1M411 348.5h1M279 349.5h1M342 349.5h1M413 349.5h1M78 350.5h3M221 350.5h1M415 350.5h1M74 351.5h4M219 351.5h1M278 351.5h1M344 351.5h1M417 351.5h1M70 352.5h4M217 352.5h1M419 352.5h1M517 352.5h3M67 353.5h3M215 353.5h1M278 353.5h1M346 353.5h1M421 353.5h1M520 353.5h4M79 354.5h3M423 354.5h1M524 354.5h5M75 355.5h4M213 355.5h1M277 355.5h1M348 355.5h1M425 355.5h1M427 355.5h1M529 355.5h2M71 356.5h4M211 356.5h1M429 356.5h1M516 356.5h3M68 357.5h3M209 357.5h1M276 357.5h1M349 357.5h1M431 357.5h1M519 357.5h4M80 358.5h3M433 358.5h1M523 358.5h5M76 359.5h4M207 359.5h1M275 359.5h1M351 359.5h1M435 359.5h1M528 359.5h2M72 360.5h4M205 360.5h1M437 360.5h1M515 360.5h3M69 361.5h3M203 361.5h1M275 361.5h1M353 361.5h1M439 361.5h1M518 361.5h4M81 362.5h3M441 362.5h1M443 362.5h1M522 362.5h5M77 363.5h4M201 363.5h1M274 363.5h1M355 363.5h1M445 363.5h1M514 363.5h2M527 363.5h2M73 364.5h4M199 364.5h1M447 364.5h1M516 364.5h3M70 365.5h3M197 365.5h1M273 365.5h1M356 365.5h1M449 365.5h1M519 365.5h4M195 366.5h1M451 366.5h1M523 366.5h3M272 367.5h1M358 367.5h1M453 367.5h1M526 367.5h2M193 368.5h1M455 368.5h1M85 369.5h1M191 369.5h1M271 369.5h1M360 369.5h1M457 369.5h1M82 370.5h3M189 370.5h1M459 370.5h1M461 370.5h1M78 371.5h4M271 371.5h1M362 371.5h1M463 371.5h1M512 371.5h2M75 372.5h3M187 372.5h1M465 372.5h1M514 372.5h3M73 373.5h2M86 373.5h2M185 373.5h1M270 373.5h1M363 373.5h1M467 373.5h1M517 373.5h4M83 374.5h3M183 374.5h1M469 374.5h1M521 374.5h3M79 375.5h4M181 375.5h1M269 375.5h1M365 375.5h1M471 375.5h1M511 375.5h2M524 375.5h1M76 376.5h3M473 376.5h1M513 376.5h3M74 377.5h2M87 377.5h2M179 377.5h1M268 377.5h1M367 377.5h1M475 377.5h1M516 377.5h3M84 378.5h3M177 378.5h1M509 378.5h2M519 378.5h3M80 379.5h4M175 379.5h1M267 379.5h1M369 379.5h1M511 379.5h2M522 379.5h2M77 380.5h3M89 380.5h1M513 380.5h3M75 381.5h2M87 381.5h2M173 381.5h1M267 381.5h1M370 381.5h1M516 381.5h3M84 382.5h3M171 382.5h1M508 382.5h2M519 382.5h2M81 383.5h3M169 383.5h1M266 383.5h1M372 383.5h1M510 383.5h2M521 383.5h2M79 384.5h2M512 384.5h2M77 385.5h2M167 385.5h1M265 385.5h1M374 385.5h1M514 385.5h3M165 386.5h1M517 386.5h2M92 387.5h1M163 387.5h1M264 387.5h1M376 387.5h1M519 387.5h2M90 388.5h2M161 388.5h1M88 389.5h2M263 389.5h1M377 389.5h1M505 389.5h1M86 390.5h2M159 390.5h1M506 390.5h2M84 391.5h2M93 391.5h2M157 391.5h1M263 391.5h1M379 391.5h1M508 391.5h2M82 392.5h2M91 392.5h2M155 392.5h1M510 392.5h2M81 393.5h1M89 393.5h2M262 393.5h1M381 393.5h1M503 393.5h2M512 393.5h2M87 394.5h2M153 394.5h1M505 394.5h2M514 394.5h2M85 395.5h2M95 395.5h2M151 395.5h1M261 395.5h1M383 395.5h1M507 395.5h3M516 395.5h1M83 396.5h2M93 396.5h2M149 396.5h1M502 396.5h1M510 396.5h3M82 397.5h1M90 397.5h3M260 397.5h1M384 397.5h1M503 397.5h2M513 397.5h2M87 398.5h3M96 398.5h2M147 398.5h1M505 398.5h2M515 398.5h1M85 399.5h2M94 399.5h2M145 399.5h1M260 399.5h1M386 399.5h1M507 399.5h2M84 400.5h1M92 400.5h2M143 400.5h1M500 400.5h1M509 400.5h2M90 401.5h2M141 401.5h1M259 401.5h1M388 401.5h1M501 401.5h2M511 401.5h2M88 402.5h2M503 402.5h2M513 402.5h1M86 403.5h2M139 403.5h1M258 403.5h1M389 403.5h1M505 403.5h2M137 404.5h1M507 404.5h2M101 405.5h1M257 405.5h1M391 405.5h1M509 405.5h2M99 406.5h2M511 406.5h1M97 407.5h2M256 407.5h1M393 407.5h1M496 407.5h1M95 408.5h2M497 408.5h2M94 409.5h1M102 409.5h2M256 409.5h1M395 409.5h1M499 409.5h2M92 410.5h2M100 410.5h2M501 410.5h2M90 411.5h2M98 411.5h2M255 411.5h1M396 411.5h1M495 411.5h2M503 411.5h2M96 412.5h2M105 412.5h1M497 412.5h2M505 412.5h2M94 413.5h2M103 413.5h2M254 413.5h1M398 413.5h1M499 413.5h1M507 413.5h2M92 414.5h2M101 414.5h2M492 414.5h1M500 414.5h2M91 415.5h1M99 415.5h2M107 415.5h1M253 415.5h1M400 415.5h1M493 415.5h2M502 415.5h2M98 416.5h1M105 416.5h2M495 416.5h2M504 416.5h2M96 417.5h2M104 417.5h1M252 417.5h1M402 417.5h1M490 417.5h1M497 417.5h1M506 417.5h1M94 418.5h2M102 418.5h2M491 418.5h2M498 418.5h2M101 419.5h1M252 419.5h1M403 419.5h1M493 419.5h2M500 419.5h2M99 420.5h2M495 420.5h1M502 420.5h2M98 421.5h1M251 421.5h1M405 421.5h1M496 421.5h2M96 422.5h2M111 422.5h1M498 422.5h2M109 423.5h2M250 423.5h1M407 423.5h1M500 423.5h2M108 424.5h1M486 424.5h1M502 424.5h1M107 425.5h1M113 425.5h1M249 425.5h1M409 425.5h1M487 425.5h2M105 426.5h2M111 426.5h2M489 426.5h1M104 427.5h1M110 427.5h1M249 427.5h1M410 427.5h1M484 427.5h1M490 427.5h2M103 428.5h1M109 428.5h1M485 428.5h2M492 428.5h2M101 429.5h2M107 429.5h2M116 429.5h1M248 429.5h1M412 429.5h1M487 429.5h1M494 429.5h1M106 430.5h1M114 430.5h2M481 430.5h1M488 430.5h1M495 430.5h2M105 431.5h1M112 431.5h2M247 431.5h1M414 431.5h1M482 431.5h2M489 431.5h2M497 431.5h1M103 432.5h2M110 432.5h2M118 432.5h1M484 432.5h1M491 432.5h1M109 433.5h1M116 433.5h2M246 433.5h1M416 433.5h1M479 433.5h1M485 433.5h1M492 433.5h1M107 434.5h2M115 434.5h1M480 434.5h2M486 434.5h2M493 434.5h2M105 435.5h2M114 435.5h1M245 435.5h1M417 435.5h1M482 435.5h1M488 435.5h1M112 436.5h2M483 436.5h1M489 436.5h1M111 437.5h1M245 437.5h1M419 437.5h1M484 437.5h2M490 437.5h2M110 438.5h1M123 438.5h1M486 438.5h1M492 438.5h1M108 439.5h2M121 439.5h2M244 439.5h1M421 439.5h1M474 439.5h1M487 439.5h1M120 440.5h1M475 440.5h1M488 440.5h2M119 441.5h1M125 441.5h1M243 441.5h1M423 441.5h1M476 441.5h2M490 441.5h1M117 442.5h2M124 442.5h1M478 442.5h1M116 443.5h1M122 443.5h2M242 443.5h1M424 443.5h1M472 443.5h1M479 443.5h1M115 444.5h1M121 444.5h1M128 444.5h1M473 444.5h1M480 444.5h1M113 445.5h2M120 445.5h1M127 445.5h1M241 445.5h1M426 445.5h1M474 445.5h2M481 445.5h1M112 446.5h1M119 446.5h1M125 446.5h2M469 446.5h1M476 446.5h1M482 446.5h2M118 447.5h1M124 447.5h1M130 447.5h1M241 447.5h1M470 447.5h2M477 447.5h1M484 447.5h1M116 448.5h2M123 448.5h1M129 448.5h1M467 448.5h1M472 448.5h1M478 448.5h1M115 449.5h1M122 449.5h1M128 449.5h1M240 449.5h1M468 449.5h1M473 449.5h1M479 449.5h2M121 450.5h1M127 450.5h1M469 450.5h1M474 450.5h2M481 450.5h1M119 451.5h2M125 451.5h2M239 451.5h1M470 451.5h1M476 451.5h1M482 451.5h1M118 452.5h1M124 452.5h1M471 452.5h1M477 452.5h1M123 453.5h1M135 453.5h1M238 453.5h1M472 453.5h1M478 453.5h2M122 454.5h1M134 454.5h1M461 454.5h1M473 454.5h1M121 455.5h1M133 455.5h1M237 455.5h1M462 455.5h1M474 455.5h1M120 456.5h1M132 456.5h1M138 456.5h1M463 456.5h1M475 456.5h1M130 457.5h2M137 457.5h1M237 457.5h1M459 457.5h1M464 457.5h1M476 457.5h1M129 458.5h1M136 458.5h1M460 458.5h1M465 458.5h1M128 459.5h1M135 459.5h1M141 459.5h1M236 459.5h1M461 459.5h1M466 459.5h1M127 460.5h1M133 460.5h2M140 460.5h1M456 460.5h1M462 460.5h1M467 460.5h1M126 461.5h1M132 461.5h1M139 461.5h1M144 461.5h1M235 461.5h1M457 461.5h1M463 461.5h1M468 461.5h1M131 462.5h1M138 462.5h1M143 462.5h1M458 462.5h1M469 462.5h1M130 463.5h1M136 463.5h2M142 463.5h1M234 463.5h1M453 463.5h1M459 463.5h1M470 463.5h1M129 464.5h1M135 464.5h1M141 464.5h1M454 464.5h1M460 464.5h1M465 464.5h1M471 464.5h1M128 465.5h1M134 465.5h1M140 465.5h1M234 465.5h1M455 465.5h1M466 465.5h1M133 466.5h1M139 466.5h1M456 466.5h1M467 466.5h1M132 467.5h1M138 467.5h1M150 467.5h1M233 467.5h1M457 467.5h1M462 467.5h1M468 467.5h1M131 468.5h1M137 468.5h1M149 468.5h1M447 468.5h1M463 468.5h1M136 469.5h1M148 469.5h1M152 469.5h1M232 469.5h1M448 469.5h1M464 469.5h1M135 470.5h1M147 470.5h1M444 470.5h1M449 470.5h1M459 470.5h1M465 470.5h1M134 471.5h1M146 471.5h1M231 471.5h1M445 471.5h1M450 471.5h1M460 471.5h1M145 472.5h1M150 472.5h1M155 472.5h1M451 472.5h1M461 472.5h1M144 473.5h1M149 473.5h1M154 473.5h1M230 473.5h1M441 473.5h1M143 474.5h1M159 474.5h1M442 474.5h1M447 474.5h1M142 475.5h1M158 475.5h1M230 475.5h1M438 475.5h1M448 475.5h1M453 475.5h1M141 476.5h1M147 476.5h1M152 476.5h1M449 476.5h1M454 476.5h1M146 477.5h1M151 477.5h1M229 477.5h1M444 477.5h1M450 477.5h1M455 477.5h1M150 478.5h1M156 478.5h1M440 478.5h1M445 478.5h1M456 478.5h1M155 479.5h1M165 479.5h1M228 479.5h1M441 479.5h1M446 479.5h1M154 480.5h1M432 480.5h1M447 480.5h1M452 480.5h1M148 481.5h1M153 481.5h1M168 481.5h1M147 482.5h1M163 482.5h1M429 482.5h1M443 482.5h1M162 483.5h1M434 483.5h1M444 483.5h1M449 483.5h1M151 484.5h1M166 484.5h1M171 484.5h1M435 484.5h1M165 485.5h1M425 485.5h1M160 486.5h1M174 486.5h1M446 486.5h1M159 487.5h1M169 487.5h1M422 487.5h1M432 487.5h1M437 487.5h1M163 488.5h1M168 488.5h1M427 488.5h1M438 488.5h1M162 489.5h1M172 489.5h1M428 489.5h1M157 490.5h1M181 490.5h1M424 490.5h1M166 491.5h1M415 491.5h1M425 491.5h1M160 492.5h1M165 492.5h1M184 492.5h1M430 492.5h1M412 493.5h1M431 493.5h1M169 494.5h1M417 494.5h1M427 494.5h1M178 495.5h1M409 495.5h1M428 495.5h1M191 496.5h1M167 497.5h1M181 497.5h1M405 497.5h1M419 497.5h1M415 498.5h1M185 499.5h1M198 500.5h1M421 500.5h1M398 501.5h1M174 502.5h1M202 502.5h1M408 502.5h1M391 504.5h1M209 505.5h1M181 506.5h1M387 506.5h1M380 509.5h1M404 512.5h1M196 513.5h1M369 513.5h1M400 514.5h1M200 515.5h1M393 517.5h1M223 524.5h1"/>
<path stroke="#c0c0c0" d="M0.5 1v598M238.5 9v3M239.5 12v5M240.5 17v4M241.5 22v4M242.5 26v5M243.5 31v5M244.5 36v3M245.5 40v5M246.5 46v3M247.5 50v5M248.5 55v4M249.5 59v5M250.5 66v3M251.5 69v4M252.5 74v3M253.5 78v2M259.5 110v2M260.5 112v4M261.5 116v5M262.5 121v5M263.5 126v5M264.5 131v4M265.5 135v5M266.5 140v5M267.5 148v2M268.5 150v3M269.5 154v5M270.5 159v2M270.5 162v2M271.5 164v5M272.5 169v5M273.5 174v4M274.5 178v2M274.5 181v2M275.5 183v5M276.5 188v5M277.5 193v4M278.5 198v4M279.5 202v5M280.5 207v5M281.5 212v4M282.5 216v5M283.5 221v5M284.5 226v4M285.5 231v4M286.5 235v5M287.5 240v5M288.5 245v5M289.5 250v4M290.5 254v5M291.5 259v5M292.5 264v5M293.5 269v4M294.5 273v5M295.5 278v5M296.5 283v5M297.5 288v2M298.5 292v5M299.5 297v2M299.5 300v2M300.5 302v5M301.5 307v4M302.5 311v5M303.5 316v5M304.5 321v5M305.5 326v4M306.5 330v5M307.5 335v5M308.5 340v5M309.5 345v4M310.5 349v5M311.5 354v5M312.5 359v5M313.5 364v4M314.5 368v5M315.5 373v5M316.5 378v5M317.5 383v4M318.5 387v5M319.5 392v5M320.5 397v5M321.5 402v4M322.5 406v5M323.5 411v5M324.5 416v5M325.5 421v4M326.5 425v5M327.5 430v5M328.5 435v5M329.5 440v4M330.5 444v5M331.5 449v5M332.5 454v5M333.5 459v5M334.5 464v4M335.5 468v5M336.5 473v5M337.5 478v5M338.5 483v4M339.5 487v2M345.5 519v2M346.5 522v3M347.5 526v4M348.5 530v3M349.5 535v5M350.5 540v4M351.5 544v4M353.5 555v4M355.5 563v5M356.5 568v5M357.5 573v4M358.5 578v4M359.5 582v5M360.5 587v3M599.5 1v598M759.5 1v598M0 0.5h760M250 64.5h1M297 291.5h1M2 299.5h13M16 299.5h44M61 299.5h14M106 299.5h25M144 299.5h5M150 299.5h149M300 299.5h41M342 299.5h72M415 299.5h77M524 299.5h13M539 299.5h43M584 299.5h13M348 534.5h1M0 599.5h760"/>
<path stroke="#ff0000" d="M57.5 213v3M346.5 549v3M352.5 549v5M354.5 555v9M356.5 549v5M362.5 549v3M422.5 176v2M423.5 174v2M424.5 172v2M425.5 169v3M431.5 167v12M431.5 180v2M444.5 202v5M445.5 200v2M445.5 207v2M459.5 200v2M459.5 207v2M460.5 202v5M469.5 325v5M479.5 325v5M485.5 318v4M487.5 119v5M489.5 125v3M497.5 125v3M499.5 119v5M744.5 239v3M744.5 281v2M745.5 108v3M745.5 150v3M745.5 187v7M746.5 111v3M746.5 290v2M747.5 108v3M747.5 187v7M747.5 288v2M749.5 189v4M749.5 281v2M750.5 287v6M751.5 150v3M751.5 189v4M752.5 107v2M752.5 110v4M752.5 239v3M745 106.5h1M748 106.5h1M750 106.5h2M744 107.5h2M748 107.5h2M750 108.5h1M751 109.5h1M751 114.5h1M491 115.5h5M490 116.5h1M496 116.5h1M489 117.5h1M497 117.5h1M488 118.5h1M498 118.5h1M488 124.5h1M498 124.5h1M485 127.5h1M486 128.5h1M488 128.5h1M498 128.5h1M487 129.5h1M499 129.5h1M500 130.5h1M501 131.5h1M745 146.5h1M751 146.5h1M746 147.5h1M750 147.5h1M747 148.5h3M746 149.5h1M750 149.5h1M746 153.5h1M750 153.5h1M747 154.5h3M433 165.5h1M346 166.5h1M432 166.5h1M343 167.5h1M422 167.5h2M240 168.5h1M424 168.5h1M242 169.5h1M244 169.5h1M340 169.5h1M246 170.5h1M337 170.5h1M248 171.5h1M250 171.5h1M252 172.5h1M334 172.5h1M254 173.5h1M331 173.5h1M256 174.5h1M258 174.5h1M260 175.5h1M328 175.5h1M262 176.5h1M264 176.5h1M266 177.5h1M325 177.5h1M268 178.5h1M270 178.5h1M322 178.5h1M421 178.5h1M272 179.5h1M421 179.5h15M274 180.5h1M276 180.5h1M319 180.5h1M278 181.5h1M316 181.5h1M280 182.5h1M282 182.5h1M284 183.5h1M313 183.5h1M286 184.5h1M310 184.5h1M288 185.5h1M290 185.5h1M292 186.5h1M307 186.5h1M744 186.5h1M746 186.5h1M748 186.5h1M294 187.5h1M296 187.5h1M749 187.5h1M751 187.5h1M298 188.5h1M304 188.5h1M749 188.5h3M300 189.5h3M304 190.5h1M298 191.5h1M306 191.5h1M308 191.5h1M295 192.5h1M310 192.5h1M312 193.5h1M314 193.5h1M750 193.5h1M292 194.5h1M316 194.5h1M406 194.5h1M749 194.5h1M751 194.5h1M289 195.5h1M318 195.5h1M199 196.5h34M320 196.5h1M322 196.5h1M450 196.5h5M233 197.5h45M279 197.5h21M324 197.5h1M448 197.5h2M455 197.5h2M300 198.5h68M447 198.5h1M457 198.5h1M283 199.5h1M330 199.5h1M368 199.5h34M446 199.5h1M458 199.5h1M280 200.5h1M332 200.5h1M334 200.5h1M336 201.5h1M277 202.5h1M338 202.5h1M340 202.5h1M274 203.5h1M342 203.5h1M344 204.5h1M346 204.5h1M452 204.5h1M271 205.5h1M348 205.5h1M268 206.5h1M350 206.5h1M352 207.5h1M354 207.5h1M265 208.5h1M356 208.5h1M358 209.5h1M360 209.5h1M446 209.5h1M458 209.5h1M262 210.5h1M362 210.5h1M447 210.5h1M457 210.5h1M53 211.5h5M259 211.5h1M364 211.5h1M366 211.5h1M448 211.5h2M455 211.5h2M56 212.5h2M368 212.5h1M450 212.5h5M55 213.5h1M256 213.5h1M370 213.5h1M372 213.5h1M54 214.5h1M253 214.5h1M374 214.5h1M422 214.5h1M53 215.5h1M376 215.5h1M378 215.5h1M52 216.5h1M250 216.5h1M380 216.5h1M43 217.5h1M51 217.5h1M247 217.5h1M382 217.5h1M44 218.5h1M50 218.5h1M384 218.5h1M386 218.5h1M45 219.5h1M49 219.5h1M244 219.5h1M388 219.5h1M46 220.5h1M48 220.5h1M390 220.5h1M392 220.5h1M47 221.5h1M241 221.5h1M394 221.5h1M46 222.5h1M48 222.5h1M238 222.5h1M396 222.5h1M398 222.5h1M45 223.5h1M49 223.5h1M400 223.5h1M44 224.5h1M50 224.5h1M235 224.5h1M402 224.5h1M404 224.5h1M43 225.5h1M51 225.5h1M232 225.5h1M406 225.5h1M42 226.5h1M408 226.5h1M410 226.5h1M41 227.5h1M229 227.5h1M412 227.5h1M226 228.5h1M414 228.5h1M416 229.5h1M418 229.5h1M223 230.5h1M420 230.5h1M422 231.5h1M424 231.5h1M220 232.5h1M426 232.5h1M217 233.5h1M214 235.5h1M211 236.5h1M747 236.5h3M745 237.5h2M750 237.5h2M208 238.5h1M745 238.5h1M751 238.5h1M205 239.5h1M748 240.5h1M202 241.5h1M745 242.5h1M751 242.5h1M199 243.5h1M745 243.5h2M750 243.5h2M196 244.5h1M747 244.5h3M193 246.5h1M190 247.5h1M187 249.5h1M184 250.5h1M181 252.5h1M178 254.5h1M175 255.5h1M172 257.5h1M169 258.5h1M166 260.5h1M163 261.5h1M750 276.5h3M751 277.5h2M750 278.5h1M752 278.5h1M746 279.5h2M749 279.5h1M745 280.5h1M748 280.5h1M745 283.5h1M748 283.5h1M746 284.5h2M751 286.5h1M745 287.5h2M745 292.5h1M745 293.5h8M750 294.5h1M149 299.5h1M480 316.5h6M484 317.5h2M483 318.5h1M482 319.5h1M447 320.5h1M481 320.5h1M480 321.5h1M472 322.5h5M479 322.5h1M471 323.5h1M477 323.5h2M470 324.5h1M478 324.5h1M470 330.5h1M478 330.5h1M471 331.5h1M477 331.5h1M472 332.5h5M348 547.5h3M358 547.5h3M347 548.5h1M351 548.5h1M357 548.5h1M361 548.5h1M347 552.5h1M361 552.5h1M348 553.5h1M360 553.5h1M353 554.5h1M355 554.5h1"/>
<path stroke="#ffff00" d="M37.5 348v7M39.5 356v5M41.5 350v5M51.5 348v3M51.5 354v7M352.5 120v2M352.5 123v5M352.5 129v6M358.5 132v3M360.5 128v3M373.5 43v13M377.5 43v13M381.5 43v3M381.5 47v7M385.5 45v9M469.5 493v5M470.5 486v2M470.5 491v2M470.5 498v2M480.5 486v2M480.5 491v2M480.5 498v2M481.5 493v5M746.5 199v2M747.5 158v5M747.5 298v2M747.5 301v3M750.5 158v5M750.5 199v2M750.5 302v2M751.5 300v2M371 41.5h1M375 41.5h1M379 41.5h1M372 42.5h1M374 42.5h1M376 42.5h1M378 42.5h1M380 42.5h1M385 43.5h1M384 44.5h2M383 45.5h1M381 46.5h2M382 54.5h1M384 54.5h1M383 55.5h1M382 56.5h1M384 56.5h1M381 57.5h1M385 57.5h1M746 116.5h1M749 116.5h1M752 116.5h1M745 117.5h2M748 117.5h2M751 117.5h1M745 118.5h1M747 118.5h2M750 118.5h2M744 119.5h1M747 119.5h1M750 119.5h1M746 121.5h1M749 121.5h1M752 121.5h1M348 122.5h9M745 122.5h2M748 122.5h2M751 122.5h1M745 123.5h1M747 123.5h2M750 123.5h2M744 124.5h1M747 124.5h1M750 124.5h1M356 126.5h3M355 127.5h1M359 127.5h1M352 128.5h3M359 131.5h1M359 135.5h1M360 136.5h1M268 153.5h1M745 156.5h1M752 156.5h1M746 157.5h6M351 159.5h1M746 163.5h6M745 164.5h1M752 164.5h1M747 198.5h3M744 201.5h4M749 201.5h4M744 203.5h9M416 216.5h1M417 217.5h1M419 221.5h1M422 225.5h1M424 229.5h1M747 296.5h1M745 297.5h5M749 299.5h2M747 300.5h2M751 304.5h1M37 346.5h1M43 346.5h1M47 346.5h3M36 347.5h2M43 347.5h2M46 347.5h1M50 347.5h1M35 348.5h1M43 348.5h1M45 348.5h1M42 349.5h1M46 349.5h1M47 350.5h1M48 351.5h1M50 351.5h1M48 352.5h2M50 353.5h1M38 355.5h1M40 355.5h1M50 361.5h1M49 362.5h1M469 485.5h1M481 485.5h1M471 488.5h2M478 488.5h2M473 489.5h5M471 490.5h2M478 490.5h2M471 500.5h2M478 500.5h2M473 501.5h5"/>
<path stroke="#ffffff" d="M15.5 287v26M16.5 275v10M16.5 313v10M17.5 265v10M17.5 323v10M18.5 255v10M18.5 333v10M19.5 248v7M19.5 343v8M20.5 243v5M20.5 351v5M21.5 238v5M21.5 356v5M22.5 234v4M22.5 361v4M23.5 230v4M23.5 365v4M24.5 226v4M24.5 369v3M25.5 223v3M25.5 372v4M26.5 220v3M26.5 376v3M27.5 217v3M27.5 379v3M28.5 214v3M28.5 382v3M29.5 211v3M29.5 385v3M30.5 207v4M30.5 388v3M31.5 204v3M31.5 391v4M32.5 201v3M32.5 395v3M33.5 199v2M33.5 398v2M34.5 197v2M34.5 400v2M35.5 195v2M35.5 402v2M36.5 192v3M36.5 404v3M37.5 190v2M37.5 407v2M38.5 188v2M38.5 409v2M39.5 186v2M39.5 411v2M40.5 183v3M40.5 413v3M41.5 181v2M41.5 416v2M42.5 179v2M42.5 418v2M43.5 177v2M43.5 420v2M44.5 174v3M44.5 422v3M45.5 172v2M45.5 425v2M46.5 170v2M46.5 427v2M47.5 168v2M47.5 429v2M48.5 166v2M48.5 431v2M49.5 164v2M49.5 433v2M50.5 162v2M50.5 435v2M51.5 160v2M51.5 437v2M52.5 158v2M52.5 439v2M54.5 155v2M54.5 442v2M55.5 153v2M56.5 445v2M57.5 150v2M57.5 447v2M59.5 147v2M59.5 450v2M60.5 289v19M60.5 309v2M61.5 144v2M61.5 270v17M61.5 311v17M61.5 453v2M62.5 264v3M62.5 268v2M62.5 330v4M63.5 141v2M63.5 260v4M63.5 334v4M63.5 456v2M64.5 254v6M64.5 338v6M65.5 138v2M65.5 248v6M65.5 344v5M65.5 459v2M66.5 136v2M66.5 244v3M66.5 350v4M67.5 240v4M67.5 354v5M67.5 462v2M68.5 133v2M68.5 236v4M68.5 359v4M68.5 464v2M69.5 232v4M69.5 363v4M70.5 130v2M70.5 229v3M70.5 367v2M71.5 370v2M71.5 468v2M72.5 224v3M72.5 372v3M73.5 126v2M73.5 220v4M73.5 375v4M74.5 217v3M74.5 379v3M74.5 472v2M75.5 214v3M75.5 290v9M75.5 300v7M75.5 308v2M75.5 382v2M76.5 212v2M76.5 272v16M76.5 310v16M76.5 384v3M77.5 209v3M77.5 265v4M77.5 270v2M77.5 328v6M77.5 387v2M78.5 259v6M78.5 334v5M79.5 205v2M79.5 255v4M79.5 339v4M79.5 391v2M80.5 203v2M80.5 251v4M80.5 343v3M80.5 393v2M81.5 201v2M81.5 247v3M81.5 347v4M81.5 395v3M82.5 199v2M82.5 244v3M82.5 351v4M82.5 398v2M83.5 115v2M83.5 197v2M83.5 240v4M83.5 355v4M83.5 400v2M84.5 194v3M84.5 236v4M84.5 359v3M84.5 402v2M84.5 483v2M85.5 192v2M85.5 232v4M85.5 362v3M85.5 404v2M86.5 111v2M86.5 190v2M86.5 229v2M86.5 366v4M86.5 406v2M87.5 227v2M87.5 370v2M87.5 487v2M88.5 225v2M88.5 372v2M88.5 410v2M89.5 185v2M89.5 221v4M89.5 374v3M89.5 412v2M90.5 183v2M90.5 217v4M90.5 377v4M90.5 414v2M91.5 181v2M91.5 214v3M91.5 381v3M91.5 416v2M92.5 385v2M93.5 178v2M93.5 210v2M93.5 387v2M93.5 419v2M94.5 176v2M94.5 389v2M94.5 421v2M95.5 174v2M95.5 206v2M95.5 391v2M95.5 423v2M96.5 204v2M96.5 393v2M97.5 171v2M97.5 202v2M97.5 395v2M97.5 426v2M98.5 200v2M98.5 397v2M99.5 198v2M99.5 399v2M100.5 167v2M100.5 196v2M100.5 430v2M101.5 403v2M102.5 164v2M102.5 192v2M102.5 405v2M102.5 433v2M103.5 190v2M103.5 407v2M104.5 188v2M104.5 409v2M105.5 160v2M105.5 283v16M105.5 300v16M105.5 437v2M106.5 185v2M106.5 276v7M106.5 316v7M106.5 412v2M107.5 157v2M107.5 269v7M107.5 323v6M107.5 440v2M108.5 182v2M108.5 263v6M108.5 329v7M108.5 415v2M109.5 258v5M109.5 336v5M110.5 179v2M110.5 254v4M110.5 341v4M110.5 444v2M111.5 251v3M111.5 345v3M111.5 420v2M112.5 175v2M112.5 248v3M112.5 348v3M112.5 422v2M113.5 149v2M113.5 245v3M113.5 351v3M114.5 241v4M114.5 354v4M114.5 449v2M115.5 171v2M115.5 238v3M115.5 358v3M116.5 235v3M116.5 361v3M116.5 427v2M117.5 232v3M117.5 364v3M118.5 229v3M118.5 367v3M119.5 142v2M119.5 166v2M119.5 226v3M119.5 370v3M119.5 431v2M119.5 455v2M120.5 224v2M120.5 373v2M121.5 222v2M121.5 375v2M122.5 377v2M122.5 435v2M123.5 217v2M123.5 379v2M124.5 136v2M124.5 215v2M124.5 381v2M125.5 158v2M125.5 213v2M125.5 383v2M125.5 462v2M126.5 211v2M126.5 385v2M126.5 440v2M127.5 209v2M127.5 387v2M128.5 207v2M128.5 389v2M129.5 205v2M129.5 391v2M130.5 152v2M130.5 203v2M130.5 393v2M131.5 395v2M131.5 446v2M132.5 200v2M132.5 397v2M134.5 197v2M134.5 400v2M136.5 194v2M136.5 403v2M137.5 192v2M139.5 189v2M139.5 408v2M141.5 186v2M141.5 411v2M144.5 128v2M144.5 182v2M144.5 415v2M147.5 535v2M148.5 177v2M149.5 421v2M149.5 532v2M151.5 529v2M153.5 171v2M153.5 426v2M153.5 526v2M155.5 132v2M155.5 523v2M156.5 110v2M157.5 482v2M157.5 520v2M159.5 114v2M159.5 517v2M160.5 138v2M161.5 514v2M162.5 118v2M163.5 511v2M164.5 143v2M165.5 508v2M167.5 505v2M169.5 149v2M169.5 502v2M170.5 48v2M171.5 50v2M171.5 152v2M171.5 498v2M172.5 52v2M173.5 54v2M173.5 98v2M173.5 495v2M174.5 56v2M174.5 100v2M175.5 58v2M175.5 492v2M176.5 60v2M176.5 103v2M177.5 62v2M177.5 105v2M177.5 489v2M178.5 64v2M178.5 107v2M179.5 66v2M180.5 68v2M181.5 70v2M182.5 72v2M183.5 74v2M184.5 76v2M185.5 78v2M186.5 80v2M187.5 82v2M188.5 84v2M189.5 508v2M190.5 506v2M191.5 88v2M191.5 504v2M192.5 90v2M193.5 92v2M193.5 501v2M194.5 94v2M194.5 499v2M195.5 96v2M196.5 98v2M208.5 516v2M209.5 513v3M210.5 80v2M210.5 510v3M211.5 82v3M211.5 508v2M212.5 85v3M213.5 88v2M218.5 503v3M219.5 501v2M220.5 498v3M221.5 495v3M222.5 493v2M223.5 490v3M224.5 487v3M225.5 485v2M226.5 482v3M227.5 480v2M228.5 522v3M229.5 518v4M230.5 73v3M230.5 146v2M230.5 515v3M231.5 76v4M231.5 148v2M232.5 80v3M232.5 150v2M233.5 83v2M233.5 152v2M234.5 154v2M235.5 156v2M247.5 530v2M248.5 525v5M249.5 66v3M249.5 521v4M250.5 69v4M250.5 519v2M251.5 73v4M252.5 77v3M253.5 81v2M254.5 83v5M255.5 88v5M256.5 93v4M257.5 97v5M258.5 102v5M259.5 107v2M267.5 141v7M267.5 532v4M268.5 134v7M268.5 526v6M269.5 63v3M269.5 522v4M270.5 66v7M271.5 73v3M286.5 572v10M287.5 550v22M288.5 531v6M288.5 539v11M289.5 524v7M290.5 61v7M291.5 68v7M307.5 524v7M308.5 531v6M309.5 68v7M310.5 49v11M310.5 62v6M311.5 27v22M312.5 17v10M327.5 522v4M328.5 526v7M329.5 73v4M329.5 533v3M330.5 67v6M331.5 63v4M339.5 490v2M340.5 492v5M341.5 497v5M342.5 502v4M343.5 506v5M344.5 511v5M345.5 516v2M346.5 519v3M347.5 522v4M348.5 78v3M348.5 526v4M349.5 73v5M349.5 530v2M350.5 69v4M350.5 139v3M351.5 67v2M351.5 142v4M352.5 146v5M353.5 151v3M365.5 514v2M366.5 516v3M367.5 84v2M367.5 519v4M368.5 81v3M368.5 523v3M369.5 77v4M370.5 74v3M371.5 117v2M372.5 114v3M373.5 112v2M374.5 109v3M375.5 106v3M376.5 104v2M377.5 101v3M378.5 98v3M379.5 96v2M380.5 93v3M385.5 509v2M386.5 511v3M387.5 89v2M387.5 514v3M388.5 86v3M388.5 517v2M389.5 83v3M390.5 81v2M403.5 500v2M404.5 98v2M404.5 502v2M405.5 96v2M405.5 504v2M406.5 94v2M406.5 506v2M407.5 508v2M408.5 91v2M409.5 89v2M410.5 513v2M411.5 515v2M412.5 517v2M413.5 519v2M414.5 521v2M415.5 523v2M416.5 525v2M417.5 527v2M418.5 529v2M419.5 531v2M420.5 490v2M420.5 533v2M421.5 108v2M421.5 492v2M421.5 535v2M422.5 537v2M423.5 105v2M423.5 495v2M423.5 539v2M424.5 497v2M424.5 541v2M425.5 102v2M425.5 499v2M425.5 543v2M426.5 545v2M427.5 99v2M427.5 445v2M427.5 547v2M428.5 549v2M429.5 95v2M429.5 448v2M431.5 92v2M433.5 89v2M434.5 454v2M435.5 86v2M436.5 479v2M437.5 83v2M438.5 459v2M439.5 80v2M439.5 483v2M440.5 116v2M441.5 77v2M442.5 487v2M443.5 74v2M443.5 465v2M445.5 71v2M445.5 171v2M445.5 426v2M447.5 68v2M449.5 65v2M449.5 421v2M450.5 177v2M451.5 62v2M454.5 182v2M454.5 415v2M455.5 470v2M457.5 186v2M457.5 411v2M459.5 189v2M459.5 408v2M461.5 405v2M462.5 194v2M462.5 403v2M464.5 197v2M464.5 400v2M466.5 200v2M466.5 397v2M467.5 395v2M467.5 446v2M468.5 152v2M468.5 203v2M468.5 393v2M469.5 205v2M469.5 391v2M470.5 207v2M470.5 389v2M471.5 209v2M471.5 387v2M472.5 211v2M472.5 385v2M472.5 440v2M473.5 158v2M473.5 213v2M473.5 383v2M473.5 462v2M474.5 136v2M474.5 215v2M474.5 381v2M475.5 217v2M475.5 379v2M476.5 162v2M476.5 219v3M477.5 222v2M477.5 375v2M478.5 224v2M478.5 373v2M479.5 142v2M479.5 166v2M479.5 226v3M479.5 370v3M479.5 431v2M479.5 455v2M480.5 229v3M480.5 367v3M481.5 232v3M481.5 364v3M482.5 235v3M482.5 361v3M482.5 427v2M483.5 171v2M483.5 238v3M483.5 358v3M484.5 241v4M484.5 354v4M484.5 449v2M485.5 149v2M485.5 245v3M485.5 351v3M486.5 175v2M486.5 248v3M486.5 348v3M486.5 422v2M487.5 177v2M487.5 251v3M487.5 345v3M488.5 153v2M488.5 254v4M488.5 341v4M488.5 418v2M489.5 258v5M489.5 336v5M490.5 182v2M490.5 263v6M490.5 329v7M490.5 415v2M491.5 157v2M491.5 269v7M491.5 323v6M491.5 440v2M492.5 185v2M492.5 276v23M492.5 300v23M492.5 412v2M493.5 160v2M493.5 437v2M494.5 188v2M494.5 409v2M495.5 190v2M495.5 407v2M496.5 164v2M496.5 192v2M496.5 405v2M496.5 433v2M497.5 194v2M498.5 167v2M498.5 401v2M498.5 430v2M499.5 198v2M499.5 399v2M500.5 200v2M500.5 397v2M501.5 171v2M501.5 202v2M501.5 395v2M501.5 426v2M502.5 204v2M502.5 393v2M503.5 174v2M503.5 206v2M503.5 391v2M503.5 423v2M504.5 176v2M504.5 208v2M504.5 421v2M505.5 178v2M505.5 210v2M505.5 387v2M505.5 419v2M506.5 212v2M507.5 181v2M507.5 215v2M507.5 381v4M507.5 416v2M508.5 183v2M508.5 217v4M508.5 377v4M508.5 414v2M509.5 185v2M509.5 221v4M509.5 374v3M509.5 412v2M510.5 225v2M510.5 372v2M510.5 410v2M511.5 227v2M511.5 370v2M511.5 408v2M511.5 487v2M512.5 111v2M512.5 229v3M512.5 368v2M512.5 406v2M513.5 192v2M513.5 234v2M513.5 362v4M513.5 404v2M514.5 194v3M514.5 236v4M514.5 359v3M514.5 402v2M514.5 483v2M515.5 115v2M515.5 197v2M515.5 240v4M515.5 355v4M515.5 400v2M516.5 199v2M516.5 244v3M516.5 351v4M516.5 398v2M517.5 201v2M517.5 247v4M517.5 349v2M517.5 395v3M518.5 203v2M518.5 253v2M518.5 343v4M518.5 393v2M519.5 205v2M519.5 255v4M519.5 339v4M520.5 207v2M520.5 259v6M520.5 334v5M520.5 389v2M521.5 210v2M521.5 265v6M521.5 326v3M521.5 330v4M521.5 387v2M522.5 212v2M522.5 272v27M522.5 300v26M522.5 384v3M523.5 214v3M523.5 382v2M524.5 217v3M524.5 379v3M524.5 472v2M525.5 126v2M525.5 220v4M525.5 375v4M526.5 224v3M526.5 372v3M527.5 227v2M527.5 369v2M527.5 468v2M528.5 130v2M528.5 230v2M528.5 367v2M529.5 232v4M529.5 363v4M530.5 133v2M530.5 236v4M530.5 359v4M530.5 464v2M531.5 240v4M531.5 354v5M531.5 462v2M532.5 136v2M532.5 244v4M532.5 352v2M533.5 138v2M533.5 250v4M533.5 344v6M533.5 459v2M534.5 254v6M534.5 338v6M535.5 141v2M535.5 260v4M535.5 334v4M535.5 456v2M536.5 264v5M536.5 328v3M536.5 332v2M537.5 144v2M537.5 270v20M537.5 291v8M537.5 300v10M537.5 311v17M537.5 453v2M539.5 147v2M539.5 450v2M541.5 150v2M541.5 447v2M542.5 445v2M543.5 153v2M544.5 155v2M544.5 442v2M546.5 158v2M546.5 439v2M547.5 160v2M547.5 437v2M548.5 162v2M548.5 435v2M549.5 164v2M549.5 433v2M550.5 166v2M550.5 431v2M551.5 168v2M551.5 429v2M552.5 170v2M552.5 427v2M553.5 172v2M553.5 425v2M554.5 174v3M554.5 422v3M555.5 177v2M555.5 420v2M556.5 179v2M556.5 418v2M557.5 181v2M557.5 416v2M558.5 183v3M558.5 413v3M559.5 186v2M559.5 411v2M560.5 188v2M560.5 409v2M561.5 190v2M561.5 407v2M562.5 192v3M562.5 404v3M563.5 195v2M563.5 402v2M564.5 197v2M564.5 400v2M565.5 199v2M565.5 398v2M566.5 201v3M566.5 395v3M567.5 204v3M567.5 391v4M568.5 207v4M568.5 388v3M569.5 211v3M569.5 385v3M570.5 214v3M570.5 382v3M571.5 217v3M571.5 379v3M572.5 220v3M572.5 376v3M573.5 223v3M573.5 372v4M574.5 226v4M574.5 369v3M575.5 230v4M575.5 365v4M576.5 234v4M576.5 361v4M577.5 238v5M577.5 356v5M578.5 243v5M578.5 351v5M579.5 248v7M579.5 343v8M580.5 255v10M580.5 333v10M581.5 265v10M581.5 323v10M582.5 275v24M582.5 300v12M582.5 313v10M285 15.5h28M275 16.5h10M312 16.5h11M265 17.5h10M323 17.5h10M255 18.5h10M333 18.5h10M248 19.5h7M343 19.5h8M243 20.5h5M351 20.5h5M238 21.5h5M356 21.5h5M234 22.5h4M361 22.5h4M230 23.5h4M365 23.5h4M226 24.5h4M369 24.5h3M223 25.5h3M372 25.5h4M220 26.5h3M376 26.5h3M217 27.5h3M379 27.5h3M214 28.5h3M382 28.5h3M211 29.5h3M385 29.5h3M207 30.5h4M388 30.5h3M204 31.5h3M391 31.5h4M201 32.5h3M395 32.5h3M199 33.5h2M398 33.5h2M197 34.5h2M400 34.5h2M195 35.5h2M402 35.5h2M192 36.5h3M404 36.5h3M190 37.5h2M407 37.5h2M188 38.5h2M409 38.5h2M186 39.5h2M411 39.5h2M183 40.5h3M413 40.5h3M181 41.5h2M416 41.5h2M179 42.5h2M418 42.5h2M177 43.5h2M420 43.5h2M174 44.5h3M422 44.5h3M172 45.5h2M425 45.5h2M170 46.5h2M427 46.5h2M168 47.5h2M429 47.5h2M166 48.5h2M431 48.5h2M164 49.5h2M433 49.5h2M162 50.5h2M435 50.5h2M160 51.5h2M437 51.5h2M158 52.5h2M439 52.5h2M157 53.5h1M441 53.5h1M155 54.5h2M442 54.5h2M153 55.5h2M444 55.5h1M152 56.5h1M445 56.5h2M150 57.5h2M447 57.5h2M149 58.5h1M449 58.5h1M147 59.5h2M450 59.5h2M146 60.5h1M287 60.5h24M452 60.5h1M144 61.5h2M270 61.5h17M310 61.5h18M452 61.5h3M143 62.5h1M264 62.5h6M328 62.5h6M455 62.5h1M141 63.5h2M260 63.5h4M334 63.5h4M456 63.5h2M140 64.5h1M254 64.5h6M338 64.5h6M450 64.5h1M458 64.5h1M138 65.5h2M248 65.5h6M344 65.5h6M459 65.5h2M136 66.5h2M244 66.5h4M350 66.5h4M461 66.5h1M135 67.5h1M240 67.5h4M354 67.5h5M448 67.5h1M462 67.5h2M133 68.5h2M236 68.5h4M359 68.5h4M464 68.5h2M132 69.5h1M232 69.5h4M363 69.5h4M466 69.5h1M130 70.5h2M229 70.5h3M367 70.5h2M446 70.5h1M467 70.5h1M129 71.5h1M227 71.5h3M369 71.5h3M468 71.5h2M128 72.5h1M224 72.5h3M229 72.5h1M371 72.5h4M470 72.5h1M126 73.5h2M220 73.5h4M371 73.5h1M375 73.5h4M444 73.5h1M471 73.5h1M125 74.5h1M217 74.5h3M379 74.5h3M472 74.5h2M124 75.5h1M214 75.5h3M288 75.5h22M382 75.5h2M474 75.5h1M123 76.5h1M212 76.5h2M271 76.5h17M310 76.5h16M384 76.5h3M442 76.5h1M475 76.5h1M122 77.5h1M209 77.5h3M265 77.5h7M326 77.5h8M387 77.5h2M476 77.5h1M121 78.5h1M207 78.5h3M259 78.5h6M334 78.5h5M389 78.5h2M477 78.5h1M120 79.5h1M205 79.5h2M209 79.5h1M255 79.5h4M339 79.5h4M391 79.5h2M440 79.5h1M478 79.5h1M119 80.5h1M203 80.5h2M251 80.5h4M343 80.5h4M391 80.5h1M393 80.5h2M479 80.5h1M118 81.5h1M201 81.5h2M247 81.5h4M347 81.5h4M395 81.5h3M480 81.5h1M117 82.5h1M199 82.5h2M244 82.5h3M351 82.5h4M398 82.5h2M438 82.5h1M481 82.5h1M115 83.5h2M197 83.5h2M240 83.5h4M355 83.5h4M400 83.5h2M482 83.5h1M114 84.5h1M194 84.5h3M236 84.5h4M359 84.5h3M402 84.5h2M483 84.5h2M113 85.5h1M192 85.5h2M232 85.5h4M362 85.5h4M404 85.5h2M436 85.5h1M485 85.5h1M111 86.5h2M189 86.5h3M229 86.5h3M366 86.5h4M406 86.5h2M486 86.5h1M110 87.5h1M188 87.5h3M227 87.5h2M370 87.5h2M408 87.5h2M487 87.5h2M109 88.5h1M187 88.5h1M225 88.5h2M372 88.5h2M410 88.5h2M434 88.5h1M489 88.5h1M108 89.5h1M185 89.5h2M221 89.5h4M374 89.5h3M412 89.5h2M490 89.5h1M107 90.5h1M183 90.5h2M214 90.5h1M217 90.5h4M377 90.5h4M414 90.5h2M491 90.5h1M106 91.5h1M181 91.5h2M214 91.5h3M381 91.5h4M386 91.5h1M416 91.5h2M432 91.5h1M492 91.5h1M105 92.5h1M180 92.5h1M212 92.5h2M381 92.5h1M385 92.5h2M418 92.5h1M493 92.5h1M104 93.5h1M178 93.5h2M210 93.5h2M387 93.5h2M407 93.5h1M419 93.5h2M494 93.5h1M103 94.5h1M176 94.5h2M208 94.5h2M389 94.5h2M421 94.5h2M430 94.5h1M495 94.5h1M102 95.5h1M174 95.5h2M206 95.5h2M391 95.5h2M423 95.5h2M496 95.5h1M101 96.5h1M173 96.5h1M204 96.5h2M393 96.5h2M425 96.5h1M497 96.5h1M100 97.5h1M171 97.5h2M202 97.5h2M395 97.5h2M426 97.5h3M498 97.5h1M99 98.5h1M170 98.5h1M200 98.5h2M397 98.5h2M428 98.5h1M499 98.5h1M98 99.5h1M169 99.5h1M198 99.5h2M399 99.5h2M429 99.5h1M500 99.5h1M97 100.5h1M167 100.5h2M196 100.5h2M401 100.5h3M430 100.5h2M501 100.5h1M96 101.5h1M166 101.5h1M194 101.5h2M403 101.5h2M426 101.5h1M432 101.5h1M502 101.5h1M95 102.5h1M164 102.5h2M175 102.5h1M192 102.5h2M405 102.5h2M433 102.5h2M503 102.5h1M94 103.5h1M163 103.5h1M190 103.5h2M407 103.5h2M435 103.5h1M504 103.5h1M93 104.5h1M162 104.5h1M188 104.5h2M409 104.5h2M424 104.5h1M436 104.5h1M505 104.5h1M92 105.5h1M160 105.5h2M187 105.5h1M283 105.5h33M411 105.5h1M437 105.5h2M506 105.5h1M91 106.5h1M159 106.5h1M185 106.5h2M276 106.5h7M316 106.5h7M412 106.5h2M439 106.5h1M507 106.5h1M90 107.5h1M157 107.5h2M184 107.5h1M269 107.5h7M323 107.5h6M414 107.5h1M422 107.5h1M440 107.5h2M508 107.5h1M89 108.5h1M156 108.5h1M182 108.5h2M263 108.5h6M329 108.5h7M415 108.5h2M442 108.5h1M509 108.5h1M88 109.5h1M155 109.5h1M179 109.5h1M181 109.5h1M258 109.5h5M336 109.5h5M417 109.5h1M443 109.5h1M510 109.5h1M87 110.5h1M153 110.5h2M179 110.5h2M254 110.5h4M341 110.5h4M418 110.5h3M444 110.5h2M511 110.5h1M152 111.5h1M177 111.5h2M251 111.5h3M345 111.5h3M420 111.5h2M445 111.5h2M151 112.5h1M157 112.5h1M175 112.5h2M248 112.5h3M348 112.5h3M422 112.5h2M444 112.5h1M447 112.5h1M85 113.5h1M149 113.5h2M158 113.5h1M174 113.5h1M245 113.5h3M351 113.5h3M424 113.5h1M443 113.5h1M448 113.5h1M513 113.5h1M84 114.5h1M148 114.5h1M173 114.5h1M241 114.5h4M354 114.5h4M425 114.5h1M442 114.5h1M449 114.5h2M514 114.5h1M147 115.5h1M171 115.5h2M238 115.5h3M358 115.5h3M426 115.5h1M441 115.5h1M451 115.5h1M146 116.5h1M160 116.5h1M170 116.5h1M235 116.5h3M361 116.5h3M427 116.5h2M452 116.5h1M82 117.5h1M145 117.5h1M161 117.5h1M169 117.5h1M232 117.5h3M364 117.5h3M429 117.5h1M453 117.5h1M516 117.5h1M81 118.5h1M144 118.5h1M168 118.5h1M229 118.5h3M367 118.5h3M430 118.5h1M439 118.5h1M454 118.5h1M517 118.5h1M80 119.5h1M142 119.5h2M166 119.5h2M226 119.5h3M371 119.5h2M431 119.5h2M438 119.5h1M455 119.5h2M518 119.5h1M79 120.5h1M141 120.5h1M163 120.5h1M165 120.5h1M224 120.5h2M373 120.5h2M433 120.5h1M437 120.5h1M457 120.5h1M519 120.5h1M78 121.5h1M140 121.5h1M164 121.5h1M222 121.5h2M375 121.5h2M434 121.5h1M436 121.5h1M458 121.5h1M520 121.5h1M77 122.5h1M139 122.5h1M162 122.5h2M219 122.5h3M377 122.5h2M435 122.5h2M459 122.5h1M521 122.5h1M76 123.5h1M138 123.5h2M161 123.5h1M217 123.5h2M379 123.5h2M437 123.5h1M460 123.5h1M522 123.5h1M75 124.5h1M136 124.5h2M140 124.5h1M160 124.5h1M215 124.5h2M381 124.5h2M438 124.5h1M461 124.5h1M523 124.5h1M74 125.5h1M135 125.5h1M141 125.5h1M158 125.5h2M213 125.5h2M383 125.5h2M439 125.5h1M460 125.5h1M462 125.5h2M524 125.5h1M134 126.5h1M142 126.5h1M157 126.5h1M211 126.5h2M385 126.5h2M440 126.5h2M459 126.5h1M464 126.5h1M133 127.5h1M143 127.5h1M156 127.5h1M209 127.5h2M387 127.5h2M442 127.5h1M458 127.5h1M465 127.5h1M72 128.5h1M132 128.5h1M155 128.5h1M207 128.5h2M389 128.5h2M443 128.5h1M457 128.5h1M466 128.5h1M526 128.5h1M71 129.5h1M131 129.5h1M154 129.5h1M205 129.5h2M391 129.5h2M444 129.5h1M456 129.5h1M467 129.5h1M527 129.5h1M130 130.5h1M145 130.5h1M152 130.5h2M203 130.5h2M393 130.5h2M445 130.5h1M455 130.5h1M468 130.5h1M129 131.5h1M146 131.5h1M151 131.5h1M154 131.5h1M202 131.5h1M395 131.5h2M446 131.5h2M454 131.5h1M469 131.5h1M69 132.5h1M128 132.5h1M147 132.5h1M150 132.5h1M200 132.5h2M397 132.5h2M448 132.5h1M453 132.5h1M470 132.5h1M529 132.5h1M127 133.5h1M148 133.5h2M199 133.5h1M399 133.5h1M449 133.5h1M452 133.5h1M471 133.5h1M126 134.5h1M148 134.5h1M156 134.5h1M197 134.5h2M400 134.5h2M450 134.5h2M472 134.5h1M67 135.5h1M125 135.5h1M147 135.5h1M157 135.5h1M196 135.5h1M402 135.5h1M451 135.5h1M473 135.5h1M531 135.5h1M146 136.5h1M158 136.5h1M194 136.5h2M403 136.5h2M452 136.5h1M145 137.5h1M159 137.5h1M192 137.5h2M405 137.5h2M453 137.5h1M123 138.5h1M125 138.5h1M144 138.5h1M191 138.5h1M251 138.5h1M407 138.5h1M454 138.5h1M475 138.5h1M122 139.5h1M126 139.5h1M143 139.5h1M189 139.5h2M252 139.5h1M408 139.5h2M455 139.5h1M475 139.5h2M64 140.5h1M121 140.5h1M127 140.5h1M142 140.5h1M161 140.5h1M188 140.5h1M253 140.5h1M410 140.5h1M456 140.5h1M474 140.5h1M477 140.5h1M534 140.5h1M120 141.5h1M128 141.5h1M141 141.5h1M162 141.5h1M186 141.5h2M254 141.5h1M411 141.5h2M457 141.5h1M473 141.5h1M478 141.5h1M129 142.5h1M140 142.5h1M163 142.5h1M185 142.5h1M255 142.5h1M413 142.5h1M458 142.5h1M472 142.5h1M62 143.5h1M130 143.5h1M139 143.5h1M184 143.5h1M256 143.5h2M414 143.5h1M459 143.5h1M470 143.5h2M536 143.5h1M118 144.5h1M131 144.5h1M138 144.5h1M182 144.5h2M258 144.5h1M415 144.5h2M460 144.5h1M469 144.5h1M480 144.5h1M117 145.5h1M132 145.5h1M137 145.5h1M165 145.5h1M181 145.5h1M259 145.5h1M417 145.5h1M461 145.5h1M468 145.5h1M481 145.5h1M60 146.5h2M116 146.5h1M133 146.5h1M136 146.5h1M166 146.5h1M180 146.5h1M260 146.5h1M418 146.5h1M462 146.5h1M467 146.5h1M482 146.5h1M538 146.5h1M62 147.5h2M115 147.5h1M134 147.5h2M167 147.5h1M179 147.5h1M261 147.5h1M419 147.5h1M463 147.5h1M466 147.5h1M483 147.5h1M64 148.5h1M114 148.5h1M134 148.5h1M168 148.5h1M177 148.5h2M262 148.5h1M420 148.5h1M464 148.5h2M484 148.5h1M58 149.5h1M65 149.5h2M133 149.5h1M176 149.5h1M421 149.5h2M465 149.5h1M540 149.5h1M67 150.5h1M132 150.5h1M175 150.5h1M423 150.5h1M466 150.5h1M68 151.5h2M112 151.5h1M131 151.5h1M170 151.5h1M174 151.5h1M424 151.5h1M467 151.5h1M486 151.5h1M56 152.5h1M70 152.5h1M111 152.5h1M173 152.5h1M425 152.5h1M487 152.5h1M542 152.5h1M71 153.5h2M110 153.5h2M426 153.5h2M73 154.5h1M110 154.5h1M112 154.5h1M129 154.5h1M170 154.5h1M428 154.5h1M469 154.5h1M74 155.5h2M109 155.5h1M113 155.5h1M128 155.5h1M169 155.5h1M429 155.5h1M470 155.5h1M489 155.5h1M76 156.5h1M108 156.5h1M114 156.5h1M127 156.5h1M168 156.5h1M430 156.5h1M471 156.5h1M487 156.5h2M490 156.5h1M53 157.5h1M77 157.5h2M115 157.5h1M126 157.5h1M167 157.5h1M431 157.5h1M472 157.5h1M486 157.5h1M545 157.5h1M79 158.5h1M116 158.5h2M166 158.5h1M432 158.5h1M485 158.5h1M80 159.5h2M106 159.5h1M118 159.5h1M165 159.5h1M433 159.5h1M483 159.5h2M492 159.5h1M82 160.5h1M119 160.5h1M124 160.5h1M164 160.5h1M434 160.5h1M474 160.5h1M482 160.5h1M83 161.5h2M120 161.5h1M123 161.5h1M163 161.5h1M435 161.5h1M475 161.5h1M481 161.5h1M85 162.5h1M104 162.5h1M121 162.5h2M162 162.5h1M436 162.5h1M479 162.5h2M494 162.5h1M86 163.5h2M103 163.5h1M122 163.5h1M161 163.5h1M437 163.5h1M478 163.5h1M495 163.5h1M88 164.5h1M121 164.5h1M160 164.5h1M438 164.5h1M477 164.5h1M89 165.5h2M120 165.5h1M159 165.5h1M439 165.5h1M478 165.5h1M91 166.5h1M101 166.5h1M158 166.5h1M440 166.5h1M497 166.5h1M92 167.5h2M157 167.5h1M441 167.5h1M94 168.5h1M118 168.5h1M156 168.5h1M442 168.5h1M480 168.5h1M95 169.5h2M99 169.5h1M117 169.5h1M155 169.5h1M443 169.5h1M481 169.5h1M499 169.5h1M97 170.5h2M116 170.5h1M154 170.5h1M444 170.5h1M482 170.5h1M500 170.5h1M549 170.5h2M99 171.5h2M547 171.5h2M101 172.5h1M545 172.5h2M96 173.5h1M102 173.5h2M114 173.5h1M152 173.5h1M446 173.5h1M484 173.5h1M499 173.5h2M502 173.5h1M543 173.5h2M104 174.5h1M113 174.5h1M151 174.5h1M447 174.5h1M485 174.5h1M497 174.5h2M541 174.5h2M105 175.5h2M150 175.5h1M448 175.5h1M495 175.5h2M539 175.5h2M107 176.5h1M149 176.5h1M449 176.5h1M494 176.5h1M537 176.5h2M108 177.5h2M111 177.5h1M492 177.5h2M535 177.5h2M110 178.5h2M490 178.5h2M533 178.5h2M147 179.5h1M182 179.5h1M451 179.5h1M485 179.5h2M488 179.5h2M531 179.5h2M92 180.5h1M146 180.5h1M183 180.5h1M452 180.5h1M483 180.5h2M488 180.5h1M506 180.5h1M529 180.5h2M109 181.5h1M145 181.5h1M184 181.5h1M453 181.5h1M482 181.5h1M489 181.5h1M527 181.5h2M185 182.5h1M419 182.5h1M480 182.5h2M525 182.5h2M186 183.5h1M418 183.5h1M478 183.5h2M523 183.5h2M107 184.5h1M143 184.5h1M187 184.5h1M417 184.5h1M455 184.5h1M477 184.5h1M491 184.5h1M521 184.5h2M142 185.5h1M188 185.5h1M416 185.5h1M456 185.5h1M475 185.5h2M519 185.5h2M189 186.5h1M414 186.5h2M473 186.5h2M517 186.5h2M88 187.5h1M105 187.5h1M190 187.5h1M413 187.5h1M472 187.5h1M493 187.5h1M510 187.5h1M515 187.5h2M87 188.5h2M140 188.5h1M191 188.5h1M412 188.5h1M458 188.5h1M470 188.5h2M511 188.5h1M513 188.5h2M87 189.5h1M89 189.5h2M411 189.5h1M468 189.5h2M511 189.5h2M91 190.5h2M410 190.5h1M467 190.5h1M510 190.5h3M93 191.5h1M138 191.5h1M460 191.5h1M465 191.5h2M508 191.5h2M512 191.5h1M94 192.5h2M461 192.5h1M463 192.5h2M506 192.5h2M96 193.5h2M461 193.5h2M504 193.5h2M98 194.5h2M101 194.5h1M502 194.5h2M100 195.5h2M500 195.5h2M135 196.5h1M463 196.5h1M498 196.5h2M498 197.5h1M133 199.5h1M465 199.5h1M131 202.5h1M467 202.5h1M78 207.5h3M78 208.5h1M81 208.5h2M94 208.5h1M83 209.5h3M94 209.5h3M519 209.5h3M86 210.5h3M97 210.5h2M427 210.5h7M517 210.5h2M89 211.5h2M99 211.5h2M434 211.5h8M514 211.5h3M91 212.5h2M101 212.5h3M511 212.5h3M92 213.5h1M104 213.5h2M509 213.5h2M106 214.5h2M507 214.5h2M108 215.5h3M111 216.5h2M113 217.5h3M116 218.5h2M118 219.5h2M122 219.5h1M120 220.5h3M122 221.5h1M437 226.5h14M71 227.5h3M71 228.5h1M74 228.5h3M77 229.5h4M526 229.5h3M81 230.5h3M523 230.5h3M84 231.5h3M519 231.5h4M513 232.5h1M516 232.5h3M513 233.5h3M66 247.5h3M69 248.5h4M533 248.5h1M73 249.5h5M530 249.5h4M78 250.5h4M526 250.5h4M518 251.5h1M522 251.5h4M518 252.5h4M62 267.5h5M67 268.5h6M73 269.5h5M533 269.5h4M526 270.5h7M521 271.5h5M15 285.5h1M15 286.5h12M27 287.5h22M60 287.5h1M49 288.5h19M75 288.5h1M68 289.5h8M531 290.5h7M524 291.5h7M75 299.5h31M131 299.5h13M492 299.5h32M537 299.5h2M582 299.5h2M68 307.5h8M60 308.5h8M524 309.5h7M531 310.5h7M539 310.5h11M550 311.5h22M572 312.5h11M453 321.5h3M456 322.5h6M462 323.5h4M77 326.5h1M73 327.5h5M62 328.5h1M66 328.5h7M62 329.5h4M521 329.5h5M526 330.5h6M532 331.5h5M77 346.5h4M73 347.5h4M517 347.5h1M69 348.5h4M517 348.5h4M65 349.5h4M521 349.5h4M525 350.5h5M532 350.5h1M530 351.5h3M83 365.5h3M80 366.5h3M512 366.5h1M76 367.5h4M512 367.5h3M73 368.5h3M515 368.5h3M71 369.5h2M518 369.5h4M522 370.5h3M525 371.5h3M476 377.5h1M476 378.5h3M479 379.5h2M481 380.5h2M483 381.5h3M486 382.5h2M488 383.5h2M90 384.5h2M490 384.5h3M88 385.5h2M493 385.5h2M506 385.5h1M85 386.5h3M495 386.5h3M506 386.5h2M82 387.5h3M498 387.5h2M508 387.5h2M80 388.5h2M500 388.5h2M510 388.5h3M78 389.5h2M502 389.5h3M513 389.5h3M78 390.5h1M504 390.5h1M516 390.5h2M518 391.5h2M519 392.5h1M133 399.5h1M465 399.5h1M100 401.5h1M98 402.5h3M135 402.5h1M463 402.5h1M96 403.5h2M497 403.5h2M94 404.5h2M497 404.5h1M499 404.5h2M92 405.5h2M136 405.5h2M501 405.5h2M90 406.5h2M134 406.5h2M137 406.5h1M503 406.5h1M88 407.5h2M132 407.5h2M138 407.5h1M460 407.5h1M504 407.5h2M87 408.5h1M131 408.5h1M506 408.5h2M86 409.5h2M129 409.5h2M508 409.5h2M84 410.5h2M127 410.5h2M140 410.5h1M458 410.5h1M82 411.5h2M105 411.5h1M126 411.5h1M493 411.5h1M80 412.5h2M124 412.5h2M78 413.5h2M122 413.5h2M142 413.5h1M456 413.5h1M76 414.5h2M107 414.5h1M121 414.5h1M143 414.5h1M455 414.5h1M491 414.5h1M74 415.5h2M119 415.5h2M72 416.5h2M117 416.5h2M70 417.5h2M109 417.5h1M116 417.5h1M145 417.5h1M453 417.5h1M489 417.5h1M68 418.5h2M92 418.5h1M110 418.5h1M114 418.5h2M146 418.5h1M452 418.5h1M506 418.5h1M66 419.5h2M109 419.5h2M112 419.5h2M147 419.5h1M451 419.5h1M64 420.5h2M107 420.5h2M148 420.5h1M450 420.5h1M487 420.5h2M62 421.5h2M105 421.5h2M487 421.5h1M489 421.5h2M60 422.5h2M103 422.5h2M491 422.5h1M58 423.5h2M102 423.5h1M150 423.5h1M448 423.5h1M492 423.5h2M56 424.5h2M100 424.5h2M113 424.5h1M151 424.5h1M447 424.5h1M485 424.5h1M494 424.5h1M54 425.5h2M96 425.5h1M98 425.5h2M114 425.5h1M152 425.5h1M446 425.5h1M484 425.5h1M495 425.5h2M502 425.5h1M52 426.5h2M115 426.5h1M483 426.5h1M497 426.5h1M50 427.5h2M498 427.5h2M48 428.5h2M98 428.5h1M154 428.5h1M444 428.5h1M500 428.5h2M99 429.5h1M117 429.5h1M155 429.5h1M443 429.5h1M481 429.5h1M499 429.5h1M502 429.5h2M118 430.5h1M156 430.5h1M442 430.5h1M480 430.5h1M504 430.5h1M157 431.5h1M441 431.5h1M505 431.5h2M101 432.5h1M158 432.5h1M440 432.5h1M497 432.5h1M507 432.5h1M120 433.5h1M159 433.5h1M439 433.5h1M478 433.5h1M508 433.5h2M121 434.5h1M160 434.5h1M438 434.5h1M477 434.5h1M510 434.5h1M103 435.5h1M120 435.5h1M161 435.5h1M437 435.5h1M476 435.5h1M495 435.5h1M511 435.5h2M104 436.5h1M118 436.5h2M162 436.5h1M436 436.5h1M476 436.5h2M494 436.5h1M513 436.5h1M117 437.5h1M123 437.5h1M163 437.5h1M435 437.5h1M475 437.5h1M478 437.5h1M514 437.5h2M116 438.5h1M124 438.5h1M164 438.5h1M434 438.5h1M474 438.5h1M479 438.5h1M516 438.5h1M106 439.5h1M114 439.5h2M125 439.5h1M165 439.5h1M433 439.5h1M473 439.5h1M480 439.5h1M492 439.5h1M517 439.5h2M113 440.5h1M166 440.5h1M432 440.5h1M481 440.5h1M519 440.5h1M53 441.5h1M112 441.5h1M167 441.5h1M431 441.5h1M482 441.5h2M520 441.5h2M545 441.5h1M108 442.5h1M110 442.5h2M127 442.5h1M168 442.5h1M430 442.5h1M471 442.5h1M484 442.5h1M490 442.5h1M522 442.5h1M109 443.5h1M128 443.5h1M169 443.5h1M429 443.5h1M470 443.5h1M485 443.5h1M489 443.5h1M523 443.5h2M55 444.5h1M129 444.5h1M170 444.5h1M428 444.5h1M469 444.5h1M486 444.5h1M488 444.5h1M525 444.5h1M543 444.5h1M130 445.5h1M171 445.5h2M468 445.5h1M487 445.5h2M526 445.5h2M111 446.5h1M173 446.5h1M425 446.5h1M487 446.5h1M528 446.5h1M112 447.5h1M174 447.5h1M424 447.5h1M428 447.5h1M486 447.5h1M529 447.5h2M113 448.5h1M132 448.5h1M175 448.5h1M423 448.5h1M466 448.5h1M485 448.5h1M531 448.5h1M58 449.5h1M133 449.5h1M176 449.5h1M421 449.5h2M465 449.5h1M532 449.5h2M540 449.5h1M133 450.5h2M177 450.5h2M420 450.5h1M430 450.5h1M464 450.5h1M534 450.5h1M115 451.5h1M132 451.5h1M135 451.5h1M179 451.5h1M419 451.5h1M431 451.5h1M463 451.5h2M483 451.5h1M535 451.5h2M60 452.5h1M116 452.5h1M131 452.5h1M136 452.5h1M180 452.5h1M418 452.5h1M432 452.5h1M462 452.5h1M465 452.5h1M482 452.5h1M537 452.5h2M117 453.5h1M130 453.5h1M137 453.5h1M181 453.5h1M417 453.5h1M433 453.5h1M461 453.5h1M466 453.5h1M481 453.5h1M118 454.5h1M128 454.5h2M138 454.5h1M182 454.5h2M415 454.5h2M460 454.5h1M467 454.5h1M480 454.5h1M62 455.5h1M127 455.5h1M139 455.5h1M184 455.5h1M414 455.5h1M459 455.5h1M468 455.5h1M536 455.5h1M126 456.5h1M140 456.5h1M185 456.5h1M413 456.5h1M435 456.5h1M458 456.5h1M469 456.5h1M120 457.5h1M125 457.5h1M141 457.5h1M186 457.5h2M411 457.5h2M436 457.5h1M457 457.5h1M470 457.5h1M478 457.5h1M64 458.5h1M121 458.5h1M124 458.5h1M142 458.5h1M188 458.5h1M410 458.5h1M437 458.5h1M456 458.5h1M471 458.5h1M477 458.5h1M534 458.5h1M122 459.5h2M143 459.5h1M189 459.5h2M408 459.5h2M455 459.5h1M472 459.5h1M476 459.5h1M123 460.5h1M144 460.5h1M191 460.5h1M407 460.5h1M454 460.5h1M473 460.5h1M475 460.5h1M66 461.5h1M124 461.5h1M145 461.5h1M192 461.5h2M405 461.5h2M439 461.5h1M453 461.5h1M474 461.5h1M532 461.5h1M146 462.5h1M194 462.5h2M403 462.5h2M440 462.5h1M452 462.5h1M147 463.5h1M196 463.5h1M402 463.5h1M441 463.5h1M451 463.5h1M126 464.5h1M147 464.5h2M197 464.5h2M400 464.5h2M442 464.5h1M450 464.5h1M472 464.5h1M127 465.5h1M146 465.5h1M149 465.5h1M199 465.5h1M399 465.5h1M449 465.5h2M471 465.5h1M69 466.5h1M128 466.5h1M145 466.5h1M150 466.5h1M200 466.5h2M397 466.5h2M448 466.5h1M451 466.5h1M470 466.5h1M529 466.5h1M70 467.5h1M129 467.5h1M144 467.5h1M151 467.5h1M202 467.5h1M395 467.5h2M444 467.5h1M446 467.5h2M452 467.5h1M469 467.5h1M528 467.5h1M130 468.5h1M143 468.5h1M152 468.5h2M203 468.5h2M393 468.5h2M445 468.5h1M453 468.5h1M468 468.5h1M131 469.5h1M142 469.5h1M154 469.5h1M205 469.5h2M391 469.5h2M444 469.5h1M454 469.5h1M467 469.5h1M72 470.5h1M132 470.5h1M141 470.5h1M155 470.5h1M207 470.5h2M389 470.5h2M443 470.5h1M466 470.5h1M526 470.5h1M73 471.5h1M133 471.5h1M140 471.5h1M156 471.5h1M209 471.5h2M387 471.5h2M442 471.5h1M465 471.5h1M525 471.5h1M134 472.5h1M139 472.5h1M157 472.5h1M211 472.5h2M385 472.5h2M440 472.5h2M456 472.5h1M464 472.5h1M135 473.5h1M138 473.5h1M158 473.5h2M213 473.5h2M383 473.5h2M439 473.5h1M457 473.5h1M462 473.5h2M75 474.5h1M136 474.5h2M160 474.5h1M215 474.5h2M381 474.5h2M438 474.5h1M458 474.5h1M461 474.5h1M523 474.5h1M76 475.5h1M138 475.5h1M161 475.5h1M217 475.5h2M379 475.5h2M437 475.5h1M459 475.5h2M522 475.5h1M77 476.5h1M139 476.5h1M162 476.5h2M219 476.5h3M377 476.5h2M435 476.5h2M459 476.5h1M521 476.5h1M78 477.5h1M140 477.5h1M162 477.5h1M164 477.5h1M222 477.5h2M375 477.5h2M434 477.5h1M458 477.5h1M520 477.5h1M79 478.5h1M141 478.5h1M161 478.5h1M165 478.5h1M224 478.5h2M373 478.5h2M433 478.5h1M435 478.5h1M457 478.5h1M519 478.5h1M80 479.5h1M142 479.5h2M160 479.5h1M166 479.5h2M226 479.5h2M370 479.5h3M431 479.5h2M455 479.5h2M518 479.5h1M81 480.5h1M144 480.5h1M159 480.5h1M168 480.5h1M229 480.5h3M367 480.5h3M430 480.5h1M454 480.5h1M517 480.5h1M82 481.5h1M145 481.5h1M158 481.5h1M169 481.5h1M232 481.5h3M364 481.5h3M429 481.5h1M437 481.5h1M453 481.5h1M516 481.5h1M83 482.5h1M146 482.5h1M170 482.5h1M235 482.5h3M361 482.5h3M427 482.5h2M438 482.5h1M452 482.5h1M515 482.5h1M147 483.5h1M171 483.5h2M238 483.5h3M358 483.5h3M426 483.5h1M451 483.5h1M148 484.5h1M156 484.5h1M173 484.5h1M241 484.5h4M354 484.5h4M425 484.5h1M449 484.5h2M85 485.5h1M149 485.5h2M155 485.5h1M174 485.5h1M245 485.5h3M351 485.5h3M424 485.5h1M440 485.5h1M448 485.5h1M513 485.5h1M86 486.5h1M151 486.5h1M154 486.5h1M175 486.5h2M248 486.5h3M348 486.5h3M422 486.5h2M441 486.5h1M447 486.5h1M512 486.5h1M152 487.5h2M177 487.5h2M251 487.5h3M345 487.5h3M420 487.5h2M446 487.5h1M153 488.5h2M178 488.5h3M254 488.5h4M341 488.5h4M418 488.5h2M444 488.5h2M88 489.5h1M155 489.5h1M181 489.5h1M258 489.5h5M336 489.5h5M417 489.5h1M419 489.5h1M443 489.5h1M510 489.5h1M89 490.5h1M156 490.5h1M182 490.5h2M263 490.5h6M329 490.5h7M415 490.5h2M442 490.5h1M509 490.5h1M90 491.5h1M157 491.5h2M176 491.5h1M184 491.5h1M269 491.5h7M323 491.5h6M414 491.5h1M440 491.5h2M508 491.5h1M91 492.5h1M159 492.5h1M185 492.5h2M276 492.5h47M412 492.5h2M439 492.5h1M507 492.5h1M92 493.5h1M160 493.5h2M187 493.5h1M411 493.5h1M437 493.5h2M506 493.5h1M93 494.5h1M162 494.5h1M174 494.5h1M188 494.5h2M409 494.5h2M422 494.5h1M436 494.5h1M505 494.5h1M94 495.5h1M163 495.5h1M190 495.5h2M407 495.5h2M435 495.5h1M504 495.5h1M95 496.5h1M164 496.5h2M192 496.5h2M405 496.5h2M433 496.5h2M503 496.5h1M96 497.5h1M166 497.5h1M172 497.5h1M194 497.5h2M403 497.5h2M432 497.5h1M502 497.5h1M97 498.5h1M167 498.5h2M195 498.5h3M401 498.5h2M430 498.5h2M501 498.5h1M98 499.5h1M169 499.5h1M198 499.5h2M399 499.5h2M402 499.5h1M429 499.5h1M500 499.5h1M99 500.5h1M170 500.5h1M200 500.5h2M397 500.5h2M428 500.5h1M499 500.5h1M100 501.5h1M170 501.5h3M202 501.5h2M395 501.5h2M426 501.5h2M498 501.5h1M101 502.5h1M173 502.5h1M204 502.5h2M393 502.5h2M425 502.5h1M497 502.5h1M102 503.5h1M174 503.5h2M192 503.5h1M206 503.5h2M391 503.5h2M423 503.5h2M496 503.5h1M103 504.5h1M168 504.5h1M176 504.5h2M208 504.5h2M389 504.5h2M421 504.5h2M495 504.5h1M104 505.5h1M178 505.5h2M210 505.5h2M387 505.5h2M419 505.5h2M494 505.5h1M105 506.5h1M180 506.5h1M212 506.5h2M217 506.5h1M385 506.5h2M418 506.5h1M493 506.5h1M106 507.5h1M166 507.5h1M181 507.5h2M212 507.5h1M214 507.5h4M381 507.5h4M416 507.5h2M492 507.5h1M107 508.5h1M183 508.5h2M217 508.5h4M377 508.5h4M384 508.5h1M414 508.5h2M491 508.5h1M108 509.5h1M185 509.5h2M221 509.5h4M374 509.5h3M412 509.5h2M490 509.5h1M109 510.5h1M164 510.5h1M187 510.5h2M225 510.5h2M372 510.5h2M408 510.5h1M410 510.5h2M489 510.5h1M110 511.5h1M188 511.5h2M227 511.5h2M370 511.5h2M408 511.5h2M487 511.5h2M111 512.5h2M190 512.5h2M229 512.5h3M366 512.5h4M406 512.5h2M409 512.5h1M486 512.5h1M113 513.5h1M162 513.5h1M192 513.5h2M231 513.5h5M362 513.5h4M404 513.5h2M485 513.5h1M114 514.5h1M194 514.5h3M231 514.5h1M236 514.5h4M359 514.5h3M402 514.5h2M483 514.5h2M115 515.5h2M197 515.5h2M240 515.5h4M355 515.5h4M400 515.5h2M482 515.5h1M117 516.5h1M160 516.5h1M199 516.5h2M244 516.5h3M351 516.5h4M398 516.5h2M481 516.5h1M118 517.5h1M201 517.5h2M247 517.5h4M347 517.5h4M395 517.5h3M480 517.5h1M119 518.5h1M203 518.5h2M207 518.5h1M250 518.5h5M343 518.5h4M393 518.5h2M479 518.5h1M120 519.5h1M158 519.5h1M205 519.5h3M255 519.5h4M339 519.5h4M389 519.5h1M391 519.5h2M478 519.5h1M121 520.5h1M207 520.5h2M259 520.5h6M334 520.5h5M389 520.5h2M477 520.5h1M122 521.5h1M209 521.5h3M265 521.5h7M326 521.5h8M387 521.5h2M476 521.5h1M123 522.5h1M156 522.5h1M212 522.5h2M272 522.5h54M384 522.5h3M475 522.5h1M124 523.5h1M214 523.5h3M382 523.5h2M474 523.5h1M125 524.5h1M217 524.5h3M379 524.5h3M472 524.5h2M126 525.5h2M154 525.5h1M220 525.5h4M227 525.5h1M375 525.5h4M471 525.5h1M128 526.5h1M224 526.5h4M369 526.5h1M372 526.5h3M470 526.5h1M129 527.5h1M227 527.5h2M369 527.5h3M468 527.5h2M130 528.5h2M152 528.5h1M229 528.5h3M367 528.5h2M467 528.5h1M132 529.5h1M232 529.5h4M363 529.5h4M466 529.5h1M133 530.5h2M236 530.5h4M359 530.5h4M464 530.5h2M135 531.5h1M150 531.5h1M240 531.5h4M354 531.5h5M462 531.5h2M136 532.5h2M244 532.5h4M349 532.5h5M461 532.5h1M138 533.5h2M248 533.5h6M344 533.5h6M459 533.5h2M140 534.5h1M148 534.5h1M254 534.5h6M338 534.5h6M458 534.5h1M141 535.5h2M260 535.5h4M334 535.5h4M456 535.5h2M143 536.5h1M264 536.5h6M328 536.5h6M455 536.5h1M144 537.5h3M270 537.5h58M453 537.5h2M146 538.5h1M452 538.5h1M147 539.5h2M450 539.5h2M149 540.5h1M449 540.5h1M150 541.5h2M447 541.5h2M152 542.5h1M445 542.5h2M153 543.5h2M444 543.5h1M155 544.5h2M442 544.5h2M157 545.5h1M441 545.5h1M158 546.5h2M439 546.5h2M160 547.5h2M437 547.5h2M162 548.5h2M435 548.5h2M164 549.5h2M433 549.5h2M166 550.5h2M431 550.5h2M168 551.5h2M429 551.5h2M170 552.5h2M427 552.5h2M172 553.5h2M425 553.5h2M174 554.5h3M422 554.5h3M177 555.5h2M420 555.5h2M179 556.5h2M418 556.5h2M181 557.5h2M416 557.5h2M183 558.5h3M413 558.5h3M186 559.5h2M411 559.5h2M188 560.5h2M409 560.5h2M190 561.5h2M407 561.5h2M192 562.5h3M404 562.5h3M195 563.5h2M402 563.5h2M197 564.5h2M400 564.5h2M199 565.5h2M398 565.5h2M201 566.5h3M395 566.5h3M204 567.5h3M391 567.5h4M207 568.5h4M388 568.5h3M211 569.5h3M385 569.5h3M214 570.5h3M382 570.5h3M217 571.5h3M379 571.5h3M220 572.5h3M376 572.5h3M223 573.5h3M372 573.5h4M226 574.5h4M369 574.5h3M230 575.5h4M365 575.5h4M234 576.5h4M361 576.5h4M238 577.5h5M356 577.5h5M243 578.5h5M351 578.5h5M248 579.5h7M343 579.5h8M255 580.5h10M333 580.5h10M265 581.5h10M323 581.5h10M275 582.5h48"/>
</g>
<g xml:space="preserve">
<text x="605.5" y="14"><tspan fill="#ffffff" stroke="#ffffff">Astrolog 5.40</tspan></text>
<text x="605.5" y="24"><tspan fill="#c0c0c0" stroke="#c0c0c0">"Anonymous"</tspan></text>
<text x="605.5" y="34"><tspan fill="#c0c0c0" stroke="#c0c0c0">Tue July 31, 1979</tspan></text>
<text x="605.5" y="44"><tspan fill="#c0c0c0" stroke="#c0c0c0"> 4:20pm (ST +8:00 GMT)</tspan></text>
<text x="605.5" y="54"><tspan fill="#c0c0c0" stroke="#c0c0c0">"Taipei"</tspan></text>
<text x="605.5" y="64"><tspan fill="#c0c0c0" stroke="#c0c0c0">120°12E 23°00N</tspan></text>
<text x="605.5" y="74"><tspan fill="#c0c0c0" stroke="#c0c0c0">Placidus houses.</tspan></text>
<text x="605.5" y="84"><tspan fill="#c0c0c0" stroke="#c0c0c0">Tropical, Geocentric.</tspan></text>
<text x="605.5" y="94"><tspan fill="#c0c0c0" stroke="#c0c0c0">Julian Day = 2444085.8472</tspan></text>
<text x="605.5" y="114"><tspan fill="#ff0000" stroke="#ff0000"> 1st house: </tspan><tspan fill="#ffff00" stroke="#ffff00"> 2Cap44</tspan></text>
<text x="605.5" y="124"><tspan fill="#ffff00" stroke="#ffff00"> 2nd house: </tspan><tspan fill="#00ff00" stroke="#00ff00"> 5Aqu38</tspan></text>
<text x="605.5" y="134"><tspan fill="#00ff00" stroke="#00ff00"> 3rd house: </tspan><tspan fill="#0000ff" stroke="#0000ff">11Pis03</tspan></text>
<text x="605.5" y="144"><tspan fill="#0000ff" stroke="#0000ff"> 4th house: </tspan><tspan fill="#ff0000" stroke="#ff0000">14Ari44</tspan></text>
<text x="605.5" y="154"><tspan fill="#ff0000" stroke="#ff0000"> 5th house: </tspan><tspan fill="#ffff00" stroke="#ffff00">13Tau42</tspan></text>
<text x="605.5" y="164"><tspan fill="#ffff00" stroke="#ffff00"> 6th house: </tspan><tspan fill="#00ff00" stroke="#00ff00"> 8Gem47</tspan></text>
<text x="605.5" y="174"><tspan fill="#00ff00" stroke="#00ff00"> 7th house: </tspan><tspan fill="#0000ff" stroke="#0000ff"> 2Can44</tspan></text>
<text x="605.5" y="184"><tspan fill="#0000ff" stroke="#0000ff"> 8th house: </tspan><tspan fill="#ff0000" stroke="#ff0000"> 5Leo38</tspan></text>
<text x="605.5" y="194"><tspan fill="#ff0000" stroke="#ff0000"> 9th house: </tspan><tspan fill="#ffff00" stroke="#ffff00">11Vir03</tspan></text>
<text x="605.5" y="204"><tspan fill="#ffff00" stroke="#ffff00">10th house: </tspan><tspan fill="#00ff00" stroke="#00ff00">14Lib44</tspan></text>
<text x="605.5" y="214"><tspan fill="#00ff00" stroke="#00ff00">11th house: </tspan><tspan fill="#0000ff" stroke="#0000ff">13Sco42</tspan></text>
<text x="605.5" y="224"><tspan fill="#0000ff" stroke="#0000ff">12th house: </tspan><tspan fill="#ff0000" stroke="#ff0000"> 8Sag47</tspan></text>
<text x="605.5" y="244"><tspan fill="#ff0000" stroke="#ff0000"> Sun: </tspan><tspan fill="#ff0000" stroke="#ff0000"> 7Leo33</tspan><tspan fill="#ffffff" stroke="#ffffff"> </tspan><tspan fill="#c0c0c0" stroke="#c0c0c0"> - 0°00'</tspan></text>
<text x="605.5" y="254"><tspan fill="#0000ff" stroke="#0000ff">Moon: </tspan><tspan fill="#00ff00" stroke="#00ff00">27Lib13</tspan><tspan fill="#ffffff" stroke="#ffffff"> </tspan><tspan fill="#c0c0c0" stroke="#c0c0c0"> + 3°55'</tspan></text>
<text x="605.5" y="264"><tspan fill="#00ff00" stroke="#00ff00">Merc: </tspan><tspan fill="#ff0000" stroke="#ff0000"> 8Leo12</tspan><tspan fill="#ffffff" stroke="#ffffff">R</tspan><tspan fill="#c0c0c0" stroke="#c0c0c0"> - 4°57'</tspan></text>
<text x="605.5" y="274"><tspan fill="#00ff00" stroke="#00ff00">Venu: </tspan><tspan fill="#ff0000" stroke="#ff0000"> 0Leo38</tspan><tspan fill="#ffffff" stroke="#ffffff"> </tspan><tspan fill="#c0c0c0" stroke="#c0c0c0"> + 0°48'</tspan></text>
<text x="605.5" y="284"><tspan fill="#ff0000" stroke="#ff0000">Mars: </tspan><tspan fill="#00ff00" stroke="#00ff00">24Gem29</tspan><tspan fill="#ffffff" stroke="#ffffff"> </tspan><tspan fill="#c0c0c0" stroke="#c0c0c0"> + 0°10'</tspan></text>
<text x="605.5" y="294"><tspan fill="#ff0000" stroke="#ff0000">Jupi: </tspan><tspan fill="#ff0000" stroke="#ff0000">17Leo11</tspan><tspan fill="#ffffff" stroke="#ffffff"> </tspan><tspan fill="#c0c0c0" stroke="#c0c0c0"> + 0°41'</tspan></text>
<text x="605.5" y="304"><tspan fill="#ffff00" stroke="#ffff00">Satu: </tspan><tspan fill="#ffff00" stroke="#ffff00">12Vir17</tspan><tspan fill="#ffffff" stroke="#ffffff"> </tspan><tspan fill="#c0c0c0" stroke="#c0c0c0"> + 1°49'</tspan></text>
<text x="605.5" y="314"><tspan fill="#00ff00" stroke="#00ff00">Uran: </tspan><tspan fill="#0000ff" stroke="#0000ff">16Sco56</tspan><tspan fill="#ffffff" stroke="#ffffff"> </tspan><tspan fill="#c0c0c0" stroke="#c0c0c0"> + 0°19'</tspan></text>
<text x="605.5" y="324"><tspan fill="#0000ff" stroke="#0000ff">Nept: </tspan><tspan fill="#ff0000" stroke="#ff0000">17Sag58</tspan><tspan fill="#ffffff" stroke="#ffffff">R</tspan><tspan fill="#c0c0c0" stroke="#c0c0c0"> + 1°26'</tspan></text>
<text x="605.5" y="334"><tspan fill="#0000ff" stroke="#0000ff">Plut: </tspan><tspan fill="#00ff00" stroke="#00ff00">16Lib45</tspan><tspan fill="#ffffff" stroke="#ffffff"> </tspan><tspan fill="#c0c0c0" stroke="#c0c0c0"> +16°57'</tspan></text>
<text x="605.5" y="344"><tspan fill="#008080" stroke="#008080">Node: </tspan><tspan fill="#ffff00" stroke="#ffff00">10Vir02</tspan><tspan fill="#ffffff" stroke="#ffffff">R</tspan><tspan fill="#c0c0c0" stroke="#c0c0c0"> + 0°00'</tspan></text>
<text x="605.5" y="364"><tspan fill="#c0c0c0" stroke="#c0c0c0">Fire: 5, Earth: 3,</tspan></text>
<text x="605.5" y="374"><tspan fill="#c0c0c0" stroke="#c0c0c0">Air : 4, Water: 1</tspan></text>
<text x="605.5" y="384"><tspan fill="#c0c0c0" stroke="#c0c0c0">Car: 4, Fix: 5, Mut: 4</tspan></text>
<text x="605.5" y="394"><tspan fill="#c0c0c0" stroke="#c0c0c0">Yang: 9, Yin: 4</tspan></text>
<text x="605.5" y="404"><tspan fill="#c0c0c0" stroke="#c0c0c0">M: 10, N: 1, A: 4, D: 7</tspan></text>
<text x="605.5" y="414"><tspan fill="#c0c0c0" stroke="#c0c0c0">Ang: 3, Suc: 5, Cad: 3</tspan></text>
<text x="605.5" y="424"><tspan fill="#c0c0c0" stroke="#c0c0c0">Learn: 7, Share: 6</tspan></text>
</g>
<g>
<text class="h" transform="translate(98.9 363) scale(0.9 1)" fill="#ff0000">1</text>
<text class="h" transform="translate(166.9 466) scale(0.9 1)" fill="#ffff00">2</text>
<text class="h" transform="translate(282.9 513) scale(0.9 1)" fill="#00ff00">3</text>
<text class="h" transform="translate(392.9 492) scale(0.9 1)" fill="#0000ff">4</text>
<text class="h" transform="translate(468.9 429) scale(0.9 1)" fill="#ff0000">5</text>
<text class="h" transform="translate(504.9 347) scale(0.9 1)" fill="#ffff00">6</text>
<text class="h" transform="translate(500.9 245) scale(0.9 1)" fill="#00ff00">7</text>
<text class="h" transform="translate(432.9 142) scale(0.9 1)" fill="#0000ff">8</text>
<text class="h" transform="translate(316.9 95) scale(0.9 1)" fill="#ff0000">9</text>
<text class="h" transform="translate(206.9 116) scale(0.9 1)" fill="#ffff00">10</text>
<text class="h" transform="translate(130.9 179) scale(0.9 1)" fill="#00ff00">11</text>
<text class="h" transform="translate(94.9 261) scale(0.9 1)" fill="#0000ff">12</text>
<text class="g" transform="translate(266.5 131) scale(0.47 1)" fill="#ffff00" stroke="#ffff00">MC</text>
<text class="g" transform="translate(119.5 308) scale(0.415 1)" fill="#ff0000" stroke="#ff0000">Asc</text>
</g>
</svg>
</body></html>
